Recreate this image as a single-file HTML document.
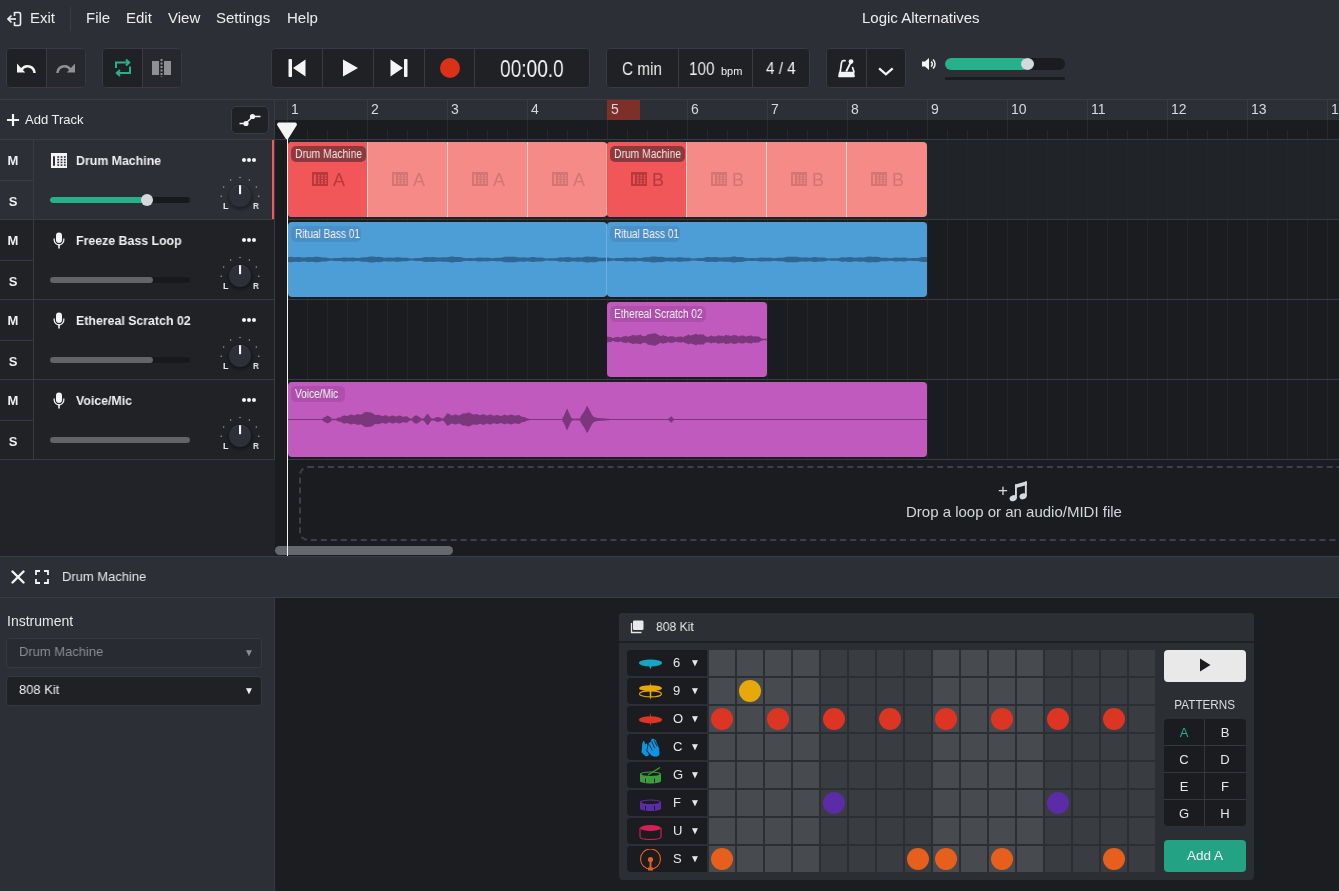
<!DOCTYPE html><html><head><meta charset="utf-8"><style>
*{box-sizing:border-box;margin:0;padding:0}
html,body{width:1339px;height:891px;overflow:hidden;background:#2c2f36;font-family:"Liberation Sans",sans-serif;color:#f2f2f2}
.abs{position:absolute}
.t{position:absolute;white-space:nowrap;line-height:1;will-change:transform}
.grp{position:absolute;background:#26282d;border:1px solid #383b42;border-radius:5px;overflow:hidden}
.sep{position:absolute;top:0;bottom:0;width:1px;background:#383b42}
</style></head><body>
<svg class="abs" style="left:7px;top:11px" width="15" height="16" viewBox="0 0 15 16"><path d="M7.5 1.5h4.5a1.5 1.5 0 0 1 1.5 1.5v10a1.5 1.5 0 0 1-1.5 1.5h-4.5" fill="none" stroke="#eee" stroke-width="1.6"/><path d="M7.5 1v4M7.5 11v4" stroke="#eee" stroke-width="1.6"/><path d="M1 8h8" stroke="#eee" stroke-width="1.7"/><path d="M4.5 4.5L1 8l3.5 3.5" fill="none" stroke="#eee" stroke-width="1.7"/></svg><div class="t" style="left:30px;top:10px;font-size:15px;color:#eee">Exit</div><div class="abs" style="left:70px;top:7px;width:1px;height:24px;background:#3a3d44"></div><div class="t" style="left:86px;top:10px;font-size:15px;color:#eee">File</div><div class="t" style="left:126px;top:10px;font-size:15px;color:#eee">Edit</div><div class="t" style="left:168px;top:10px;font-size:15px;color:#eee">View</div><div class="t" style="left:216px;top:10px;font-size:15px;color:#eee">Settings</div><div class="t" style="left:287px;top:10px;font-size:15px;color:#eee">Help</div><div class="t" style="left:862px;top:10px;font-size:15px;color:#eee">Logic Alternatives</div><div class="grp" style="left:6px;top:48px;width:80px;height:40px"><div class="abs" style="left:0px;top:0;width:40px;height:100%;background:#1f2125"></div><div class="abs" style="left:40px;top:0;width:38px;height:100%;background:#26282d"></div><div class="sep" style="left:39px"></div></div><div class="grp" style="left:102px;top:48px;width:80px;height:40px"><div class="abs" style="left:0px;top:0;width:40px;height:100%;background:#1f2125"></div><div class="abs" style="left:40px;top:0;width:38px;height:100%;background:#26282d"></div><div class="sep" style="left:39px"></div></div><div class="grp" style="left:271px;top:48px;width:319px;height:40px"><div class="abs" style="left:0px;top:0;width:51px;height:100%;background:#1f2125"></div><div class="abs" style="left:51px;top:0;width:51px;height:100%;background:#1f2125"></div><div class="sep" style="left:50px"></div><div class="abs" style="left:102px;top:0;width:51px;height:100%;background:#1f2125"></div><div class="sep" style="left:101px"></div><div class="abs" style="left:153px;top:0;width:50px;height:100%;background:#1f2125"></div><div class="sep" style="left:152px"></div><div class="abs" style="left:203px;top:0;width:116px;height:100%;background:#1f2125"></div><div class="sep" style="left:202px"></div></div><div class="grp" style="left:606px;top:48px;width:204px;height:40px"><div class="abs" style="left:0px;top:0;width:72px;height:100%;background:#1f2125"></div><div class="abs" style="left:72px;top:0;width:74px;height:100%;background:#1f2125"></div><div class="sep" style="left:71px"></div><div class="abs" style="left:146px;top:0;width:58px;height:100%;background:#1f2125"></div><div class="sep" style="left:145px"></div></div><div class="grp" style="left:826px;top:48px;width:80px;height:40px"><div class="abs" style="left:0px;top:0;width:40px;height:100%;background:#1f2125"></div><div class="abs" style="left:40px;top:0;width:40px;height:100%;background:#1f2125"></div><div class="sep" style="left:39px"></div></div><svg class="abs" style="left:16px;top:59px" width="20" height="16" viewBox="0 0 20 16"><path d="M5.6 10.5A7 7 0 0 1 18.5 14" fill="none" stroke="#f4f4f4" stroke-width="2.5"/><path d="M1 4.6V13.4H9.2z" fill="#f4f4f4"/></svg><svg class="abs" style="left:56px;top:59px" width="20" height="16" viewBox="0 0 20 16"><path d="M14.4 10.5A7 7 0 0 0 1.5 14" fill="none" stroke="#8f9094" stroke-width="2.5"/><path d="M19 4.6V13.4H10.8z" fill="#8f9094"/></svg><svg class="abs" style="left:113px;top:58px" width="20" height="20" viewBox="0 0 20 20"><path d="M3 10V4.5h12" fill="none" stroke="#26b28c" stroke-width="2"/><path d="M13 1.5l3.2 3-3.2 3" fill="none" stroke="#26b28c" stroke-width="2"/><path d="M17 8.5V15H5" fill="none" stroke="#26b28c" stroke-width="2"/><path d="M7 12l-3.2 3L7 18" fill="none" stroke="#26b28c" stroke-width="2"/></svg><svg class="abs" style="left:151px;top:58px" width="22" height="20" viewBox="0 0 22 20"><rect x="1" y="3" width="7" height="14" fill="#8f9094"/><rect x="13" y="3" width="7" height="14" fill="#8f9094"/><path d="M10.5 1v18" stroke="#8f9094" stroke-width="2" stroke-dasharray="2 1.5"/></svg><svg class="abs" style="left:287px;top:58px" width="20" height="20" viewBox="0 0 20 20"><rect x="1.5" y="1" width="3.5" height="18" rx="0.8" fill="#f4f4f4"/><path d="M18.5 1.5V18.5L6 10z" fill="#f4f4f4"/></svg><svg class="abs" style="left:341px;top:58px" width="20" height="20" viewBox="0 0 20 20"><path d="M2 1.5V18.5L17 10z" fill="#f4f4f4"/></svg><svg class="abs" style="left:389px;top:58px" width="20" height="20" viewBox="0 0 20 20"><path d="M1.5 1.5V18.5L14 10z" fill="#f4f4f4"/><rect x="15" y="1" width="3.5" height="18" rx="0.8" fill="#f4f4f4"/></svg><div class="abs" style="left:440px;top:58px;width:20px;height:20px;border-radius:50%;background:#d93218"></div><div class="t" style="left:500px;top:57px;font-size:24.5px;color:#f4f4f4;transform:scaleX(0.78);transform-origin:0 0">00:00.0</div><div class="t" style="left:622px;top:60px;font-size:18px;color:#f0f0f0;transform:scaleX(0.85);transform-origin:0 0">C min</div><div class="t" style="left:689px;top:60px;font-size:18px;color:#f0f0f0;transform:scaleX(0.85);transform-origin:0 0">100</div><div class="t" style="left:721px;top:66px;font-size:11px;color:#f0f0f0">bpm</div><div class="t" style="left:766px;top:60px;font-size:17px;color:#f0f0f0;transform:scaleX(0.9);transform-origin:0 0">4 / 4</div><svg class="abs" style="left:836px;top:58px" width="20" height="20" viewBox="0 0 20 20"><path d="M3 13.7H18L18.8 18Q19 19.2 17.8 19.2H3.2Q2 19.2 2.2 18Z" fill="#f4f4f4"/><path d="M4.2 14L5.5 4.8Q5.8 2.8 7.6 2.7H9" fill="none" stroke="#f4f4f4" stroke-width="1.7" stroke-linecap="round"/><path d="M16.6 9.6L18 14" stroke="#f4f4f4" stroke-width="1.7" stroke-linecap="round"/><path d="M10.2 13.5L15 3.8" stroke="#f4f4f4" stroke-width="1.9"/><circle cx="15" cy="3.6" r="2.4" fill="#f4f4f4"/></svg><svg class="abs" style="left:877px;top:60px" width="18" height="18" viewBox="0 0 18 18"><path d="M2.1 8.3L8.9 14.3L15.7 8.3" fill="none" stroke="#f4f4f4" stroke-width="2.3"/></svg><svg class="abs" style="left:921px;top:57px" width="16" height="14" viewBox="0 0 16 14"><path d="M1 4.5h3l4-3.5v12l-4-3.5H1z" fill="#f4f4f4"/><path d="M10 4.5a3 3 0 0 1 0 5M12 2.5a6 6 0 0 1 0 9" fill="none" stroke="#f4f4f4" stroke-width="1.5"/></svg><div class="abs" style="left:945px;top:58px;width:120px;height:12px;border-radius:6px;background:#1b1c1f"></div><div class="abs" style="left:945px;top:58px;width:84px;height:12px;border-radius:6px;background:#26b08b"></div><div class="abs" style="left:1021px;top:58px;width:13px;height:12px;border-radius:50%;background:#d5d9dc"></div><div class="abs" style="left:945px;top:77px;width:120px;height:3px;border-radius:1px;background:#1b1c1f"></div><div class="abs" style="left:0;top:99px;width:1339px;height:1px;background:#383b42"></div><div class="abs" style="left:0;top:100px;width:275px;height:456px;background:#212328"></div><div class="abs" style="left:0;top:100px;width:275px;height:39px;background:#2c2f36"></div><svg class="abs" style="left:7px;top:114px" width="12" height="12" viewBox="0 0 12 12"><path d="M6 0v12M0 6h12" stroke="#f4f4f4" stroke-width="2.2"/></svg><div class="t" style="left:25px;top:113px;font-size:13px;color:#f0f0f0">Add Track</div><div class="abs" style="left:231px;top:106px;width:38px;height:28px;border-radius:5px;background:#1f2125;border:1px solid #3a3d44"></div><svg class="abs" style="left:239px;top:112px" width="22" height="16" viewBox="0 0 22 16"><path d="M0.5 11.5h6M16 4.5h5.5M6.5 11.5L14 4.5" stroke="#f4f4f4" stroke-width="1.4"/><circle cx="7" cy="11.5" r="2.6" fill="#f4f4f4"/><circle cx="13.5" cy="4.5" r="2.6" fill="#f4f4f4"/></svg><div class="abs" style="left:0;top:139px;width:1339px;height:1px;background:#383b42"></div><div class="abs" style="left:0;top:140px;width:275px;height:79px;background:#2c2f36"></div><div class="abs" style="left:0;top:219px;width:275px;height:1px;background:#383b42"></div><div class="abs" style="left:33px;top:140px;width:1px;height:79px;background:#383b42"></div><div class="abs" style="left:0;top:180px;width:33px;height:1px;background:#383b42"></div><div class="t" style="left:3px;top:154px;width:20px;text-align:center;font-size:13px;font-weight:bold;color:#f0f0f0">M</div><div class="t" style="left:3px;top:195px;width:20px;text-align:center;font-size:13px;font-weight:bold;color:#f0f0f0">S</div><svg class="abs" style="left:51px;top:153px" width="16" height="15" viewBox="0 0 16 15"><rect x="0" y="0" width="16" height="15" fill="#f4f4f4"/><rect x="2" y="3" width="2" height="10" rx="1" fill="#2c2f36"/><rect x="6.3" y="3.2" width="1.8" height="1.6" fill="#2c2f36"/><rect x="6.3" y="5.9" width="1.8" height="1.6" fill="#2c2f36"/><rect x="6.3" y="8.6" width="1.8" height="1.6" fill="#2c2f36"/><rect x="6.3" y="11.3" width="1.8" height="1.6" fill="#2c2f36"/><rect x="9.6" y="3.2" width="1.8" height="1.6" fill="#2c2f36"/><rect x="9.6" y="5.9" width="1.8" height="1.6" fill="#2c2f36"/><rect x="9.6" y="8.6" width="1.8" height="1.6" fill="#2c2f36"/><rect x="9.6" y="11.3" width="1.8" height="1.6" fill="#2c2f36"/><rect x="12.9" y="3.2" width="1.8" height="1.6" fill="#2c2f36"/><rect x="12.9" y="5.9" width="1.8" height="1.6" fill="#2c2f36"/><rect x="12.9" y="8.6" width="1.8" height="1.6" fill="#2c2f36"/><rect x="12.9" y="11.3" width="1.8" height="1.6" fill="#2c2f36"/></svg><div class="t" style="left:76px;top:154px;font-size:13px;font-weight:bold;color:#f0f0f0;transform:scaleX(0.95);transform-origin:0 0">Drum Machine</div><div class="abs" style="left:242px;top:158px;width:4px;height:4px;border-radius:50%;background:#f4f4f4"></div><div class="abs" style="left:247px;top:158px;width:4px;height:4px;border-radius:50%;background:#f4f4f4"></div><div class="abs" style="left:252px;top:158px;width:4px;height:4px;border-radius:50%;background:#f4f4f4"></div><div class="abs" style="left:50px;top:197px;width:140px;height:6px;border-radius:3px;background:#18191c"></div><div class="abs" style="left:50px;top:197px;width:98px;height:6px;border-radius:3px;background:#26b08b"></div><div class="abs" style="left:141px;top:194px;width:12px;height:12px;border-radius:50%;background:#d5d9dc"></div><svg class="abs" style="left:220px;top:176px" width="40" height="40" viewBox="0 0 40 40"><defs><radialGradient id="ks0"><stop offset="0.6" stop-color="#000" stop-opacity="0.4"/><stop offset="1" stop-color="#000" stop-opacity="0"/></radialGradient><linearGradient id="kr0" x1="0" y1="0" x2="0" y2="1"><stop offset="0" stop-color="#454850"/><stop offset="0.5" stop-color="#2d3038"/></linearGradient></defs><circle cx="20.0" cy="1.5" r="0.75" fill="#a0a2a6"/><circle cx="29.4" cy="4.0" r="0.75" fill="#a0a2a6"/><circle cx="10.6" cy="4.0" r="0.75" fill="#a0a2a6"/><circle cx="36.3" cy="10.9" r="0.75" fill="#a0a2a6"/><circle cx="3.7" cy="10.9" r="0.75" fill="#a0a2a6"/><circle cx="38.8" cy="20.3" r="0.75" fill="#a0a2a6"/><circle cx="1.2" cy="20.3" r="0.75" fill="#a0a2a6"/><circle cx="20.5" cy="21.5" r="14.5" fill="url(#ks0)"/><circle cx="20" cy="20" r="11" fill="url(#kr0)"/><circle cx="20" cy="20" r="10.5" fill="#2d3038"/><rect x="19" y="9.2" width="2.1" height="9" fill="#f4f4f4"/></svg><div class="t" style="left:222.5px;top:202px;font-size:9px;font-weight:bold;color:#e8e8e8">L</div><div class="t" style="left:253px;top:202px;font-size:9px;font-weight:bold;color:#e8e8e8;transform:scaleX(0.9);transform-origin:0 0">R</div><div class="abs" style="left:272px;top:140px;width:3px;height:79px;background:#f05a57"></div><div class="abs" style="left:0;top:220px;width:275px;height:79px;background:#202226"></div><div class="abs" style="left:0;top:299px;width:275px;height:1px;background:#383b42"></div><div class="abs" style="left:33px;top:220px;width:1px;height:79px;background:#383b42"></div><div class="abs" style="left:0;top:260px;width:33px;height:1px;background:#383b42"></div><div class="t" style="left:3px;top:234px;width:20px;text-align:center;font-size:13px;font-weight:bold;color:#f0f0f0">M</div><div class="t" style="left:3px;top:275px;width:20px;text-align:center;font-size:13px;font-weight:bold;color:#f0f0f0">S</div><svg class="abs" style="left:53px;top:232px" width="12" height="17" viewBox="0 0 12 17"><rect x="3" y="0.5" width="6" height="10.5" rx="3" fill="#f4f4f4"/><path d="M1.2 6.5v1.5a4.8 4.8 0 0 0 9.6 0V6.5" fill="none" stroke="#f4f4f4" stroke-width="1.3"/><rect x="5.2" y="12" width="1.6" height="4.5" fill="#f4f4f4"/></svg><div class="t" style="left:76px;top:234px;font-size:13px;font-weight:bold;color:#f0f0f0;transform:scaleX(0.95);transform-origin:0 0">Freeze Bass Loop</div><div class="abs" style="left:242px;top:238px;width:4px;height:4px;border-radius:50%;background:#f4f4f4"></div><div class="abs" style="left:247px;top:238px;width:4px;height:4px;border-radius:50%;background:#f4f4f4"></div><div class="abs" style="left:252px;top:238px;width:4px;height:4px;border-radius:50%;background:#f4f4f4"></div><div class="abs" style="left:50px;top:277px;width:140px;height:6px;border-radius:3px;background:#18191c"></div><div class="abs" style="left:50px;top:277px;width:103px;height:6px;border-radius:3px;background:#636468"></div><svg class="abs" style="left:220px;top:256px" width="40" height="40" viewBox="0 0 40 40"><defs><radialGradient id="ks1"><stop offset="0.6" stop-color="#000" stop-opacity="0.4"/><stop offset="1" stop-color="#000" stop-opacity="0"/></radialGradient><linearGradient id="kr1" x1="0" y1="0" x2="0" y2="1"><stop offset="0" stop-color="#454850"/><stop offset="0.5" stop-color="#2d3038"/></linearGradient></defs><circle cx="20.0" cy="1.5" r="0.75" fill="#a0a2a6"/><circle cx="29.4" cy="4.0" r="0.75" fill="#a0a2a6"/><circle cx="10.6" cy="4.0" r="0.75" fill="#a0a2a6"/><circle cx="36.3" cy="10.9" r="0.75" fill="#a0a2a6"/><circle cx="3.7" cy="10.9" r="0.75" fill="#a0a2a6"/><circle cx="38.8" cy="20.3" r="0.75" fill="#a0a2a6"/><circle cx="1.2" cy="20.3" r="0.75" fill="#a0a2a6"/><circle cx="20.5" cy="21.5" r="14.5" fill="url(#ks1)"/><circle cx="20" cy="20" r="11" fill="url(#kr1)"/><circle cx="20" cy="20" r="10.5" fill="#2d3038"/><rect x="19" y="9.2" width="2.1" height="9" fill="#f4f4f4"/></svg><div class="t" style="left:222.5px;top:282px;font-size:9px;font-weight:bold;color:#e8e8e8">L</div><div class="t" style="left:253px;top:282px;font-size:9px;font-weight:bold;color:#e8e8e8;transform:scaleX(0.9);transform-origin:0 0">R</div><div class="abs" style="left:0;top:300px;width:275px;height:79px;background:#202226"></div><div class="abs" style="left:0;top:379px;width:275px;height:1px;background:#383b42"></div><div class="abs" style="left:33px;top:300px;width:1px;height:79px;background:#383b42"></div><div class="abs" style="left:0;top:340px;width:33px;height:1px;background:#383b42"></div><div class="t" style="left:3px;top:314px;width:20px;text-align:center;font-size:13px;font-weight:bold;color:#f0f0f0">M</div><div class="t" style="left:3px;top:355px;width:20px;text-align:center;font-size:13px;font-weight:bold;color:#f0f0f0">S</div><svg class="abs" style="left:53px;top:312px" width="12" height="17" viewBox="0 0 12 17"><rect x="3" y="0.5" width="6" height="10.5" rx="3" fill="#f4f4f4"/><path d="M1.2 6.5v1.5a4.8 4.8 0 0 0 9.6 0V6.5" fill="none" stroke="#f4f4f4" stroke-width="1.3"/><rect x="5.2" y="12" width="1.6" height="4.5" fill="#f4f4f4"/></svg><div class="t" style="left:76px;top:314px;font-size:13px;font-weight:bold;color:#f0f0f0;transform:scaleX(0.95);transform-origin:0 0">Ethereal Scratch 02</div><div class="abs" style="left:242px;top:318px;width:4px;height:4px;border-radius:50%;background:#f4f4f4"></div><div class="abs" style="left:247px;top:318px;width:4px;height:4px;border-radius:50%;background:#f4f4f4"></div><div class="abs" style="left:252px;top:318px;width:4px;height:4px;border-radius:50%;background:#f4f4f4"></div><div class="abs" style="left:50px;top:357px;width:140px;height:6px;border-radius:3px;background:#18191c"></div><div class="abs" style="left:50px;top:357px;width:103px;height:6px;border-radius:3px;background:#636468"></div><svg class="abs" style="left:220px;top:336px" width="40" height="40" viewBox="0 0 40 40"><defs><radialGradient id="ks2"><stop offset="0.6" stop-color="#000" stop-opacity="0.4"/><stop offset="1" stop-color="#000" stop-opacity="0"/></radialGradient><linearGradient id="kr2" x1="0" y1="0" x2="0" y2="1"><stop offset="0" stop-color="#454850"/><stop offset="0.5" stop-color="#2d3038"/></linearGradient></defs><circle cx="20.0" cy="1.5" r="0.75" fill="#a0a2a6"/><circle cx="29.4" cy="4.0" r="0.75" fill="#a0a2a6"/><circle cx="10.6" cy="4.0" r="0.75" fill="#a0a2a6"/><circle cx="36.3" cy="10.9" r="0.75" fill="#a0a2a6"/><circle cx="3.7" cy="10.9" r="0.75" fill="#a0a2a6"/><circle cx="38.8" cy="20.3" r="0.75" fill="#a0a2a6"/><circle cx="1.2" cy="20.3" r="0.75" fill="#a0a2a6"/><circle cx="20.5" cy="21.5" r="14.5" fill="url(#ks2)"/><circle cx="20" cy="20" r="11" fill="url(#kr2)"/><circle cx="20" cy="20" r="10.5" fill="#2d3038"/><rect x="19" y="9.2" width="2.1" height="9" fill="#f4f4f4"/></svg><div class="t" style="left:222.5px;top:362px;font-size:9px;font-weight:bold;color:#e8e8e8">L</div><div class="t" style="left:253px;top:362px;font-size:9px;font-weight:bold;color:#e8e8e8;transform:scaleX(0.9);transform-origin:0 0">R</div><div class="abs" style="left:0;top:380px;width:275px;height:79px;background:#202226"></div><div class="abs" style="left:0;top:459px;width:275px;height:1px;background:#383b42"></div><div class="abs" style="left:33px;top:380px;width:1px;height:79px;background:#383b42"></div><div class="abs" style="left:0;top:420px;width:33px;height:1px;background:#383b42"></div><div class="t" style="left:3px;top:394px;width:20px;text-align:center;font-size:13px;font-weight:bold;color:#f0f0f0">M</div><div class="t" style="left:3px;top:435px;width:20px;text-align:center;font-size:13px;font-weight:bold;color:#f0f0f0">S</div><svg class="abs" style="left:53px;top:392px" width="12" height="17" viewBox="0 0 12 17"><rect x="3" y="0.5" width="6" height="10.5" rx="3" fill="#f4f4f4"/><path d="M1.2 6.5v1.5a4.8 4.8 0 0 0 9.6 0V6.5" fill="none" stroke="#f4f4f4" stroke-width="1.3"/><rect x="5.2" y="12" width="1.6" height="4.5" fill="#f4f4f4"/></svg><div class="t" style="left:76px;top:394px;font-size:13px;font-weight:bold;color:#f0f0f0;transform:scaleX(0.95);transform-origin:0 0">Voice/Mic</div><div class="abs" style="left:242px;top:398px;width:4px;height:4px;border-radius:50%;background:#f4f4f4"></div><div class="abs" style="left:247px;top:398px;width:4px;height:4px;border-radius:50%;background:#f4f4f4"></div><div class="abs" style="left:252px;top:398px;width:4px;height:4px;border-radius:50%;background:#f4f4f4"></div><div class="abs" style="left:50px;top:437px;width:140px;height:6px;border-radius:3px;background:#18191c"></div><div class="abs" style="left:50px;top:437px;width:140px;height:6px;border-radius:3px;background:#636468"></div><svg class="abs" style="left:220px;top:416px" width="40" height="40" viewBox="0 0 40 40"><defs><radialGradient id="ks3"><stop offset="0.6" stop-color="#000" stop-opacity="0.4"/><stop offset="1" stop-color="#000" stop-opacity="0"/></radialGradient><linearGradient id="kr3" x1="0" y1="0" x2="0" y2="1"><stop offset="0" stop-color="#454850"/><stop offset="0.5" stop-color="#2d3038"/></linearGradient></defs><circle cx="20.0" cy="1.5" r="0.75" fill="#a0a2a6"/><circle cx="29.4" cy="4.0" r="0.75" fill="#a0a2a6"/><circle cx="10.6" cy="4.0" r="0.75" fill="#a0a2a6"/><circle cx="36.3" cy="10.9" r="0.75" fill="#a0a2a6"/><circle cx="3.7" cy="10.9" r="0.75" fill="#a0a2a6"/><circle cx="38.8" cy="20.3" r="0.75" fill="#a0a2a6"/><circle cx="1.2" cy="20.3" r="0.75" fill="#a0a2a6"/><circle cx="20.5" cy="21.5" r="14.5" fill="url(#ks3)"/><circle cx="20" cy="20" r="11" fill="url(#kr3)"/><circle cx="20" cy="20" r="10.5" fill="#2d3038"/><rect x="19" y="9.2" width="2.1" height="9" fill="#f4f4f4"/></svg><div class="t" style="left:222.5px;top:442px;font-size:9px;font-weight:bold;color:#e8e8e8">L</div><div class="t" style="left:253px;top:442px;font-size:9px;font-weight:bold;color:#e8e8e8;transform:scaleX(0.9);transform-origin:0 0">R</div><div class="abs" style="left:274px;top:100px;width:1px;height:360px;background:#383b42"></div><div class="abs" style="left:275px;top:100px;width:1064px;height:20px;background:#2c2f36"></div><div class="abs" style="left:275px;top:120px;width:1064px;height:19px;background:#1b1c1f"></div><div class="abs" style="left:275px;top:140px;width:1064px;height:416px;background:#1b1c1f"></div><div class="abs" style="left:287px;top:140px;width:1052px;height:79px;background:#202327"></div><div class="abs" style="left:287px;top:100px;width:1px;height:20px;background:#383b42"></div><div class="abs" style="left:287px;top:120px;width:1px;height:19px;background:#26292d"></div><div class="abs" style="left:287px;top:140px;width:1px;height:320px;background:#222627"></div><div class="abs" style="left:307px;top:130px;width:1px;height:9px;background:#25292b"></div><div class="abs" style="left:307px;top:140px;width:1px;height:320px;background:#222627"></div><div class="abs" style="left:327px;top:130px;width:1px;height:9px;background:#25292b"></div><div class="abs" style="left:327px;top:140px;width:1px;height:320px;background:#222627"></div><div class="abs" style="left:347px;top:130px;width:1px;height:9px;background:#25292b"></div><div class="abs" style="left:347px;top:140px;width:1px;height:320px;background:#222627"></div><div class="abs" style="left:367px;top:100px;width:1px;height:20px;background:#383b42"></div><div class="abs" style="left:367px;top:120px;width:1px;height:19px;background:#26292d"></div><div class="abs" style="left:367px;top:140px;width:1px;height:320px;background:#222627"></div><div class="abs" style="left:387px;top:130px;width:1px;height:9px;background:#25292b"></div><div class="abs" style="left:387px;top:140px;width:1px;height:320px;background:#222627"></div><div class="abs" style="left:407px;top:130px;width:1px;height:9px;background:#25292b"></div><div class="abs" style="left:407px;top:140px;width:1px;height:320px;background:#222627"></div><div class="abs" style="left:427px;top:130px;width:1px;height:9px;background:#25292b"></div><div class="abs" style="left:427px;top:140px;width:1px;height:320px;background:#222627"></div><div class="abs" style="left:447px;top:100px;width:1px;height:20px;background:#383b42"></div><div class="abs" style="left:447px;top:120px;width:1px;height:19px;background:#26292d"></div><div class="abs" style="left:447px;top:140px;width:1px;height:320px;background:#222627"></div><div class="abs" style="left:467px;top:130px;width:1px;height:9px;background:#25292b"></div><div class="abs" style="left:467px;top:140px;width:1px;height:320px;background:#222627"></div><div class="abs" style="left:487px;top:130px;width:1px;height:9px;background:#25292b"></div><div class="abs" style="left:487px;top:140px;width:1px;height:320px;background:#222627"></div><div class="abs" style="left:507px;top:130px;width:1px;height:9px;background:#25292b"></div><div class="abs" style="left:507px;top:140px;width:1px;height:320px;background:#222627"></div><div class="abs" style="left:527px;top:100px;width:1px;height:20px;background:#383b42"></div><div class="abs" style="left:527px;top:120px;width:1px;height:19px;background:#26292d"></div><div class="abs" style="left:527px;top:140px;width:1px;height:320px;background:#222627"></div><div class="abs" style="left:547px;top:130px;width:1px;height:9px;background:#25292b"></div><div class="abs" style="left:547px;top:140px;width:1px;height:320px;background:#222627"></div><div class="abs" style="left:567px;top:130px;width:1px;height:9px;background:#25292b"></div><div class="abs" style="left:567px;top:140px;width:1px;height:320px;background:#222627"></div><div class="abs" style="left:587px;top:130px;width:1px;height:9px;background:#25292b"></div><div class="abs" style="left:587px;top:140px;width:1px;height:320px;background:#222627"></div><div class="abs" style="left:607px;top:100px;width:1px;height:20px;background:#383b42"></div><div class="abs" style="left:607px;top:120px;width:1px;height:19px;background:#26292d"></div><div class="abs" style="left:607px;top:140px;width:1px;height:320px;background:#222627"></div><div class="abs" style="left:627px;top:130px;width:1px;height:9px;background:#25292b"></div><div class="abs" style="left:627px;top:140px;width:1px;height:320px;background:#222627"></div><div class="abs" style="left:647px;top:130px;width:1px;height:9px;background:#25292b"></div><div class="abs" style="left:647px;top:140px;width:1px;height:320px;background:#222627"></div><div class="abs" style="left:667px;top:130px;width:1px;height:9px;background:#25292b"></div><div class="abs" style="left:667px;top:140px;width:1px;height:320px;background:#222627"></div><div class="abs" style="left:687px;top:100px;width:1px;height:20px;background:#383b42"></div><div class="abs" style="left:687px;top:120px;width:1px;height:19px;background:#26292d"></div><div class="abs" style="left:687px;top:140px;width:1px;height:320px;background:#222627"></div><div class="abs" style="left:707px;top:130px;width:1px;height:9px;background:#25292b"></div><div class="abs" style="left:707px;top:140px;width:1px;height:320px;background:#222627"></div><div class="abs" style="left:727px;top:130px;width:1px;height:9px;background:#25292b"></div><div class="abs" style="left:727px;top:140px;width:1px;height:320px;background:#222627"></div><div class="abs" style="left:747px;top:130px;width:1px;height:9px;background:#25292b"></div><div class="abs" style="left:747px;top:140px;width:1px;height:320px;background:#222627"></div><div class="abs" style="left:767px;top:100px;width:1px;height:20px;background:#383b42"></div><div class="abs" style="left:767px;top:120px;width:1px;height:19px;background:#26292d"></div><div class="abs" style="left:767px;top:140px;width:1px;height:320px;background:#222627"></div><div class="abs" style="left:787px;top:130px;width:1px;height:9px;background:#25292b"></div><div class="abs" style="left:787px;top:140px;width:1px;height:320px;background:#222627"></div><div class="abs" style="left:807px;top:130px;width:1px;height:9px;background:#25292b"></div><div class="abs" style="left:807px;top:140px;width:1px;height:320px;background:#222627"></div><div class="abs" style="left:827px;top:130px;width:1px;height:9px;background:#25292b"></div><div class="abs" style="left:827px;top:140px;width:1px;height:320px;background:#222627"></div><div class="abs" style="left:847px;top:100px;width:1px;height:20px;background:#383b42"></div><div class="abs" style="left:847px;top:120px;width:1px;height:19px;background:#26292d"></div><div class="abs" style="left:847px;top:140px;width:1px;height:320px;background:#222627"></div><div class="abs" style="left:867px;top:130px;width:1px;height:9px;background:#25292b"></div><div class="abs" style="left:867px;top:140px;width:1px;height:320px;background:#222627"></div><div class="abs" style="left:887px;top:130px;width:1px;height:9px;background:#25292b"></div><div class="abs" style="left:887px;top:140px;width:1px;height:320px;background:#222627"></div><div class="abs" style="left:907px;top:130px;width:1px;height:9px;background:#25292b"></div><div class="abs" style="left:907px;top:140px;width:1px;height:320px;background:#222627"></div><div class="abs" style="left:927px;top:100px;width:1px;height:20px;background:#383b42"></div><div class="abs" style="left:927px;top:120px;width:1px;height:19px;background:#26292d"></div><div class="abs" style="left:927px;top:140px;width:1px;height:320px;background:#222627"></div><div class="abs" style="left:947px;top:130px;width:1px;height:9px;background:#25292b"></div><div class="abs" style="left:947px;top:140px;width:1px;height:320px;background:#222627"></div><div class="abs" style="left:967px;top:130px;width:1px;height:9px;background:#25292b"></div><div class="abs" style="left:967px;top:140px;width:1px;height:320px;background:#222627"></div><div class="abs" style="left:987px;top:130px;width:1px;height:9px;background:#25292b"></div><div class="abs" style="left:987px;top:140px;width:1px;height:320px;background:#222627"></div><div class="abs" style="left:1007px;top:100px;width:1px;height:20px;background:#383b42"></div><div class="abs" style="left:1007px;top:120px;width:1px;height:19px;background:#26292d"></div><div class="abs" style="left:1007px;top:140px;width:1px;height:320px;background:#222627"></div><div class="abs" style="left:1027px;top:130px;width:1px;height:9px;background:#25292b"></div><div class="abs" style="left:1027px;top:140px;width:1px;height:320px;background:#222627"></div><div class="abs" style="left:1047px;top:130px;width:1px;height:9px;background:#25292b"></div><div class="abs" style="left:1047px;top:140px;width:1px;height:320px;background:#222627"></div><div class="abs" style="left:1067px;top:130px;width:1px;height:9px;background:#25292b"></div><div class="abs" style="left:1067px;top:140px;width:1px;height:320px;background:#222627"></div><div class="abs" style="left:1087px;top:100px;width:1px;height:20px;background:#383b42"></div><div class="abs" style="left:1087px;top:120px;width:1px;height:19px;background:#26292d"></div><div class="abs" style="left:1087px;top:140px;width:1px;height:320px;background:#222627"></div><div class="abs" style="left:1107px;top:130px;width:1px;height:9px;background:#25292b"></div><div class="abs" style="left:1107px;top:140px;width:1px;height:320px;background:#222627"></div><div class="abs" style="left:1127px;top:130px;width:1px;height:9px;background:#25292b"></div><div class="abs" style="left:1127px;top:140px;width:1px;height:320px;background:#222627"></div><div class="abs" style="left:1147px;top:130px;width:1px;height:9px;background:#25292b"></div><div class="abs" style="left:1147px;top:140px;width:1px;height:320px;background:#222627"></div><div class="abs" style="left:1167px;top:100px;width:1px;height:20px;background:#383b42"></div><div class="abs" style="left:1167px;top:120px;width:1px;height:19px;background:#26292d"></div><div class="abs" style="left:1167px;top:140px;width:1px;height:320px;background:#222627"></div><div class="abs" style="left:1187px;top:130px;width:1px;height:9px;background:#25292b"></div><div class="abs" style="left:1187px;top:140px;width:1px;height:320px;background:#222627"></div><div class="abs" style="left:1207px;top:130px;width:1px;height:9px;background:#25292b"></div><div class="abs" style="left:1207px;top:140px;width:1px;height:320px;background:#222627"></div><div class="abs" style="left:1227px;top:130px;width:1px;height:9px;background:#25292b"></div><div class="abs" style="left:1227px;top:140px;width:1px;height:320px;background:#222627"></div><div class="abs" style="left:1247px;top:100px;width:1px;height:20px;background:#383b42"></div><div class="abs" style="left:1247px;top:120px;width:1px;height:19px;background:#26292d"></div><div class="abs" style="left:1247px;top:140px;width:1px;height:320px;background:#222627"></div><div class="abs" style="left:1267px;top:130px;width:1px;height:9px;background:#25292b"></div><div class="abs" style="left:1267px;top:140px;width:1px;height:320px;background:#222627"></div><div class="abs" style="left:1287px;top:130px;width:1px;height:9px;background:#25292b"></div><div class="abs" style="left:1287px;top:140px;width:1px;height:320px;background:#222627"></div><div class="abs" style="left:1307px;top:130px;width:1px;height:9px;background:#25292b"></div><div class="abs" style="left:1307px;top:140px;width:1px;height:320px;background:#222627"></div><div class="abs" style="left:1327px;top:100px;width:1px;height:20px;background:#383b42"></div><div class="abs" style="left:1327px;top:120px;width:1px;height:19px;background:#26292d"></div><div class="abs" style="left:1327px;top:140px;width:1px;height:320px;background:#222627"></div><div class="t" style="left:291px;top:102px;font-size:14px;color:#d8d9db">1</div><div class="t" style="left:371px;top:102px;font-size:14px;color:#d8d9db">2</div><div class="t" style="left:451px;top:102px;font-size:14px;color:#d8d9db">3</div><div class="t" style="left:531px;top:102px;font-size:14px;color:#d8d9db">4</div><div class="abs" style="left:607px;top:100px;width:33px;height:20px;background:#7e3028"></div><div class="t" style="left:611px;top:102px;font-size:14px;color:#d8d9db">5</div><div class="t" style="left:691px;top:102px;font-size:14px;color:#d8d9db">6</div><div class="t" style="left:771px;top:102px;font-size:14px;color:#d8d9db">7</div><div class="t" style="left:851px;top:102px;font-size:14px;color:#d8d9db">8</div><div class="t" style="left:931px;top:102px;font-size:14px;color:#d8d9db">9</div><div class="t" style="left:1011px;top:102px;font-size:14px;color:#d8d9db">10</div><div class="t" style="left:1091px;top:102px;font-size:14px;color:#d8d9db">11</div><div class="t" style="left:1171px;top:102px;font-size:14px;color:#d8d9db">12</div><div class="t" style="left:1251px;top:102px;font-size:14px;color:#d8d9db">13</div><div class="t" style="left:1331px;top:102px;font-size:14px;color:#d8d9db">14</div><div class="abs" style="left:287px;top:219px;width:1052px;height:1px;background:#393b44"></div><div class="abs" style="left:287px;top:299px;width:1052px;height:1px;background:#393b44"></div><div class="abs" style="left:287px;top:379px;width:1052px;height:1px;background:#393b44"></div><div class="abs" style="left:287px;top:459px;width:1052px;height:1px;background:#393b44"></div><div class="abs" style="left:288px;top:142px;width:319px;height:75px;border-radius:4px;overflow:hidden;background:#f58a87"><div class="abs" style="left:318px;top:0;width:1px;height:75px;background:#f7a9a6"></div><div class="abs" style="left:0;top:0;width:79px;height:75px;background:#f15758"></div><div class="abs" style="left:79px;top:0;width:1px;height:75px;background:#fbd3d1"></div><div class="abs" style="left:159px;top:0;width:1px;height:75px;background:#fbd3d1"></div><div class="abs" style="left:239px;top:0;width:1px;height:75px;background:#fbd3d1"></div><svg class="abs" style="left:24px;top:30px" width="16" height="14" viewBox="0 0 16 14"><rect width="16" height="14" fill="#b8393c"/><rect x="2" y="2.5" width="1.8" height="9.5" fill="#f15758"/><rect x="6.0" y="3.0" width="1.6" height="1.5" fill="#f15758"/><rect x="6.0" y="5.5" width="1.6" height="1.5" fill="#f15758"/><rect x="6.0" y="8.0" width="1.6" height="1.5" fill="#f15758"/><rect x="6.0" y="10.5" width="1.6" height="1.5" fill="#f15758"/><rect x="9.4" y="3.0" width="1.6" height="1.5" fill="#f15758"/><rect x="9.4" y="5.5" width="1.6" height="1.5" fill="#f15758"/><rect x="9.4" y="8.0" width="1.6" height="1.5" fill="#f15758"/><rect x="9.4" y="10.5" width="1.6" height="1.5" fill="#f15758"/><rect x="12.8" y="3.0" width="1.6" height="1.5" fill="#f15758"/><rect x="12.8" y="5.5" width="1.6" height="1.5" fill="#f15758"/><rect x="12.8" y="8.0" width="1.6" height="1.5" fill="#f15758"/><rect x="12.8" y="10.5" width="1.6" height="1.5" fill="#f15758"/></svg><div class="t" style="left:45px;top:29px;font-size:18px;color:#b8393c">A</div><svg class="abs" style="left:104px;top:30px" width="16" height="14" viewBox="0 0 16 14"><rect width="16" height="14" fill="#d27573"/><rect x="2" y="2.5" width="1.8" height="9.5" fill="#f58a87"/><rect x="6.0" y="3.0" width="1.6" height="1.5" fill="#f58a87"/><rect x="6.0" y="5.5" width="1.6" height="1.5" fill="#f58a87"/><rect x="6.0" y="8.0" width="1.6" height="1.5" fill="#f58a87"/><rect x="6.0" y="10.5" width="1.6" height="1.5" fill="#f58a87"/><rect x="9.4" y="3.0" width="1.6" height="1.5" fill="#f58a87"/><rect x="9.4" y="5.5" width="1.6" height="1.5" fill="#f58a87"/><rect x="9.4" y="8.0" width="1.6" height="1.5" fill="#f58a87"/><rect x="9.4" y="10.5" width="1.6" height="1.5" fill="#f58a87"/><rect x="12.8" y="3.0" width="1.6" height="1.5" fill="#f58a87"/><rect x="12.8" y="5.5" width="1.6" height="1.5" fill="#f58a87"/><rect x="12.8" y="8.0" width="1.6" height="1.5" fill="#f58a87"/><rect x="12.8" y="10.5" width="1.6" height="1.5" fill="#f58a87"/></svg><div class="t" style="left:125px;top:29px;font-size:18px;color:#d27573">A</div><svg class="abs" style="left:184px;top:30px" width="16" height="14" viewBox="0 0 16 14"><rect width="16" height="14" fill="#d27573"/><rect x="2" y="2.5" width="1.8" height="9.5" fill="#f58a87"/><rect x="6.0" y="3.0" width="1.6" height="1.5" fill="#f58a87"/><rect x="6.0" y="5.5" width="1.6" height="1.5" fill="#f58a87"/><rect x="6.0" y="8.0" width="1.6" height="1.5" fill="#f58a87"/><rect x="6.0" y="10.5" width="1.6" height="1.5" fill="#f58a87"/><rect x="9.4" y="3.0" width="1.6" height="1.5" fill="#f58a87"/><rect x="9.4" y="5.5" width="1.6" height="1.5" fill="#f58a87"/><rect x="9.4" y="8.0" width="1.6" height="1.5" fill="#f58a87"/><rect x="9.4" y="10.5" width="1.6" height="1.5" fill="#f58a87"/><rect x="12.8" y="3.0" width="1.6" height="1.5" fill="#f58a87"/><rect x="12.8" y="5.5" width="1.6" height="1.5" fill="#f58a87"/><rect x="12.8" y="8.0" width="1.6" height="1.5" fill="#f58a87"/><rect x="12.8" y="10.5" width="1.6" height="1.5" fill="#f58a87"/></svg><div class="t" style="left:205px;top:29px;font-size:18px;color:#d27573">A</div><svg class="abs" style="left:264px;top:30px" width="16" height="14" viewBox="0 0 16 14"><rect width="16" height="14" fill="#d27573"/><rect x="2" y="2.5" width="1.8" height="9.5" fill="#f58a87"/><rect x="6.0" y="3.0" width="1.6" height="1.5" fill="#f58a87"/><rect x="6.0" y="5.5" width="1.6" height="1.5" fill="#f58a87"/><rect x="6.0" y="8.0" width="1.6" height="1.5" fill="#f58a87"/><rect x="6.0" y="10.5" width="1.6" height="1.5" fill="#f58a87"/><rect x="9.4" y="3.0" width="1.6" height="1.5" fill="#f58a87"/><rect x="9.4" y="5.5" width="1.6" height="1.5" fill="#f58a87"/><rect x="9.4" y="8.0" width="1.6" height="1.5" fill="#f58a87"/><rect x="9.4" y="10.5" width="1.6" height="1.5" fill="#f58a87"/><rect x="12.8" y="3.0" width="1.6" height="1.5" fill="#f58a87"/><rect x="12.8" y="5.5" width="1.6" height="1.5" fill="#f58a87"/><rect x="12.8" y="8.0" width="1.6" height="1.5" fill="#f58a87"/><rect x="12.8" y="10.5" width="1.6" height="1.5" fill="#f58a87"/></svg><div class="t" style="left:285px;top:29px;font-size:18px;color:#d27573">A</div><div class="abs" style="left:3px;top:4px;width:75px;height:16px;border-radius:5px;background:#8d3a3e"></div><div class="t" style="left:7px;top:6px;font-size:12px;color:#f3e3e3;transform:scaleX(0.86);transform-origin:0 0">Drum Machine</div></div><div class="abs" style="left:607px;top:142px;width:320px;height:75px;border-radius:4px;overflow:hidden;background:#f58a87"><div class="abs" style="left:0;top:0;width:79px;height:75px;background:#f15758"></div><div class="abs" style="left:79px;top:0;width:1px;height:75px;background:#fbd3d1"></div><div class="abs" style="left:159px;top:0;width:1px;height:75px;background:#fbd3d1"></div><div class="abs" style="left:239px;top:0;width:1px;height:75px;background:#fbd3d1"></div><svg class="abs" style="left:24px;top:30px" width="16" height="14" viewBox="0 0 16 14"><rect width="16" height="14" fill="#b8393c"/><rect x="2" y="2.5" width="1.8" height="9.5" fill="#f15758"/><rect x="6.0" y="3.0" width="1.6" height="1.5" fill="#f15758"/><rect x="6.0" y="5.5" width="1.6" height="1.5" fill="#f15758"/><rect x="6.0" y="8.0" width="1.6" height="1.5" fill="#f15758"/><rect x="6.0" y="10.5" width="1.6" height="1.5" fill="#f15758"/><rect x="9.4" y="3.0" width="1.6" height="1.5" fill="#f15758"/><rect x="9.4" y="5.5" width="1.6" height="1.5" fill="#f15758"/><rect x="9.4" y="8.0" width="1.6" height="1.5" fill="#f15758"/><rect x="9.4" y="10.5" width="1.6" height="1.5" fill="#f15758"/><rect x="12.8" y="3.0" width="1.6" height="1.5" fill="#f15758"/><rect x="12.8" y="5.5" width="1.6" height="1.5" fill="#f15758"/><rect x="12.8" y="8.0" width="1.6" height="1.5" fill="#f15758"/><rect x="12.8" y="10.5" width="1.6" height="1.5" fill="#f15758"/></svg><div class="t" style="left:45px;top:29px;font-size:18px;color:#b8393c">B</div><svg class="abs" style="left:104px;top:30px" width="16" height="14" viewBox="0 0 16 14"><rect width="16" height="14" fill="#d27573"/><rect x="2" y="2.5" width="1.8" height="9.5" fill="#f58a87"/><rect x="6.0" y="3.0" width="1.6" height="1.5" fill="#f58a87"/><rect x="6.0" y="5.5" width="1.6" height="1.5" fill="#f58a87"/><rect x="6.0" y="8.0" width="1.6" height="1.5" fill="#f58a87"/><rect x="6.0" y="10.5" width="1.6" height="1.5" fill="#f58a87"/><rect x="9.4" y="3.0" width="1.6" height="1.5" fill="#f58a87"/><rect x="9.4" y="5.5" width="1.6" height="1.5" fill="#f58a87"/><rect x="9.4" y="8.0" width="1.6" height="1.5" fill="#f58a87"/><rect x="9.4" y="10.5" width="1.6" height="1.5" fill="#f58a87"/><rect x="12.8" y="3.0" width="1.6" height="1.5" fill="#f58a87"/><rect x="12.8" y="5.5" width="1.6" height="1.5" fill="#f58a87"/><rect x="12.8" y="8.0" width="1.6" height="1.5" fill="#f58a87"/><rect x="12.8" y="10.5" width="1.6" height="1.5" fill="#f58a87"/></svg><div class="t" style="left:125px;top:29px;font-size:18px;color:#d27573">B</div><svg class="abs" style="left:184px;top:30px" width="16" height="14" viewBox="0 0 16 14"><rect width="16" height="14" fill="#d27573"/><rect x="2" y="2.5" width="1.8" height="9.5" fill="#f58a87"/><rect x="6.0" y="3.0" width="1.6" height="1.5" fill="#f58a87"/><rect x="6.0" y="5.5" width="1.6" height="1.5" fill="#f58a87"/><rect x="6.0" y="8.0" width="1.6" height="1.5" fill="#f58a87"/><rect x="6.0" y="10.5" width="1.6" height="1.5" fill="#f58a87"/><rect x="9.4" y="3.0" width="1.6" height="1.5" fill="#f58a87"/><rect x="9.4" y="5.5" width="1.6" height="1.5" fill="#f58a87"/><rect x="9.4" y="8.0" width="1.6" height="1.5" fill="#f58a87"/><rect x="9.4" y="10.5" width="1.6" height="1.5" fill="#f58a87"/><rect x="12.8" y="3.0" width="1.6" height="1.5" fill="#f58a87"/><rect x="12.8" y="5.5" width="1.6" height="1.5" fill="#f58a87"/><rect x="12.8" y="8.0" width="1.6" height="1.5" fill="#f58a87"/><rect x="12.8" y="10.5" width="1.6" height="1.5" fill="#f58a87"/></svg><div class="t" style="left:205px;top:29px;font-size:18px;color:#d27573">B</div><svg class="abs" style="left:264px;top:30px" width="16" height="14" viewBox="0 0 16 14"><rect width="16" height="14" fill="#d27573"/><rect x="2" y="2.5" width="1.8" height="9.5" fill="#f58a87"/><rect x="6.0" y="3.0" width="1.6" height="1.5" fill="#f58a87"/><rect x="6.0" y="5.5" width="1.6" height="1.5" fill="#f58a87"/><rect x="6.0" y="8.0" width="1.6" height="1.5" fill="#f58a87"/><rect x="6.0" y="10.5" width="1.6" height="1.5" fill="#f58a87"/><rect x="9.4" y="3.0" width="1.6" height="1.5" fill="#f58a87"/><rect x="9.4" y="5.5" width="1.6" height="1.5" fill="#f58a87"/><rect x="9.4" y="8.0" width="1.6" height="1.5" fill="#f58a87"/><rect x="9.4" y="10.5" width="1.6" height="1.5" fill="#f58a87"/><rect x="12.8" y="3.0" width="1.6" height="1.5" fill="#f58a87"/><rect x="12.8" y="5.5" width="1.6" height="1.5" fill="#f58a87"/><rect x="12.8" y="8.0" width="1.6" height="1.5" fill="#f58a87"/><rect x="12.8" y="10.5" width="1.6" height="1.5" fill="#f58a87"/></svg><div class="t" style="left:285px;top:29px;font-size:18px;color:#d27573">B</div><div class="abs" style="left:3px;top:4px;width:75px;height:16px;border-radius:5px;background:#8d3a3e"></div><div class="t" style="left:7px;top:6px;font-size:12px;color:#f3e3e3;transform:scaleX(0.86);transform-origin:0 0">Drum Machine</div></div><div class="abs" style="left:288px;top:222px;width:319px;height:75px;border-radius:4px;overflow:hidden;background:#4d9dd7"><svg class="abs" style="left:0;top:0" width="319" height="75" viewBox="0 0 319 75"><path d="M0.0,35.16 L1.0,34.95 L2.0,34.82 L3.0,34.80 L4.0,34.88 L5.0,35.02 L6.0,35.14 L7.0,35.20 L8.0,35.18 L9.0,35.11 L10.0,35.04 L11.0,35.04 L12.0,35.12 L13.0,35.28 L14.0,35.45 L15.0,35.57 L16.0,35.60 L17.0,35.52 L18.0,35.36 L19.0,35.19 L20.0,35.07 L21.0,35.03 L22.0,35.07 L23.0,35.13 L24.0,35.17 L25.0,35.13 L26.0,35.01 L27.0,34.84 L28.0,34.71 L29.0,34.65 L30.0,34.72 L31.0,34.89 L32.0,35.10 L33.0,35.30 L34.0,35.43 L35.0,35.48 L36.0,35.48 L37.0,35.49 L38.0,35.56 L39.0,35.72 L40.0,35.95 L41.0,36.18 L42.0,36.36 L43.0,36.42 L44.0,36.38 L45.0,36.25 L46.0,36.11 L47.0,36.02 L48.0,36.00 L49.0,36.04 L50.0,36.10 L51.0,36.11 L52.0,36.04 L53.0,35.88 L54.0,35.67 L55.0,35.49 L56.0,35.39 L57.0,35.40 L58.0,35.50 L59.0,35.64 L60.0,35.75 L61.0,35.80 L62.0,35.76 L63.0,35.68 L64.0,35.61 L65.0,35.61 L66.0,35.69 L67.0,35.84 L68.0,35.99 L69.0,36.09 L70.0,36.08 L71.0,35.95 L72.0,35.76 L73.0,35.56 L74.0,35.41 L75.0,35.34 L76.0,35.34 L77.0,35.35 L78.0,35.31 L79.0,35.20 L80.0,35.00 L81.0,34.77 L82.0,34.57 L83.0,34.46 L84.0,34.47 L85.0,34.58 L86.0,34.73 L87.0,34.85 L88.0,34.92 L89.0,34.91 L90.0,34.87 L91.0,34.85 L92.0,34.91 L93.0,35.07 L94.0,35.29 L95.0,35.52 L96.0,35.69 L97.0,35.75 L98.0,35.71 L99.0,35.61 L100.0,35.50 L101.0,35.45 L102.0,35.48 L103.0,35.56 L104.0,35.66 L105.0,35.70 L106.0,35.65 L107.0,35.51 L108.0,35.35 L109.0,35.21 L110.0,35.16 L111.0,35.22 L112.0,35.38 L113.0,35.56 L114.0,35.71 L115.0,35.79 L116.0,35.79 L117.0,35.76 L118.0,35.75 L119.0,35.82 L120.0,35.97 L121.0,36.18 L122.0,36.39 L123.0,36.53 L124.0,36.56 L125.0,36.47 L126.0,36.32 L127.0,36.17 L128.0,36.06 L129.0,36.04 L130.0,36.06 L131.0,36.08 L132.0,36.03 L133.0,35.89 L134.0,35.67 L135.0,35.42 L136.0,35.19 L137.0,35.06 L138.0,35.04 L139.0,35.11 L140.0,35.21 L141.0,35.27 L142.0,35.26 L143.0,35.19 L144.0,35.09 L145.0,35.02 L146.0,35.04 L147.0,35.15 L148.0,35.33 L149.0,35.51 L150.0,35.62 L151.0,35.62 L152.0,35.53 L153.0,35.38 L154.0,35.24 L155.0,35.16 L156.0,35.16 L157.0,35.21 L158.0,35.26 L159.0,35.25 L160.0,35.15 L161.0,34.98 L162.0,34.78 L163.0,34.62 L164.0,34.55 L165.0,34.61 L166.0,34.75 L167.0,34.91 L168.0,35.05 L169.0,35.11 L170.0,35.11 L171.0,35.09 L172.0,35.11 L173.0,35.21 L174.0,35.42 L175.0,35.68 L176.0,35.93 L177.0,36.11 L178.0,36.18 L179.0,36.16 L180.0,36.07 L181.0,35.99 L182.0,35.97 L183.0,36.03 L184.0,36.12 L185.0,36.20 L186.0,36.21 L187.0,36.11 L188.0,35.93 L189.0,35.73 L190.0,35.56 L191.0,35.48 L192.0,35.50 L193.0,35.61 L194.0,35.72 L195.0,35.80 L196.0,35.79 L197.0,35.72 L198.0,35.64 L199.0,35.59 L200.0,35.63 L201.0,35.76 L202.0,35.95 L203.0,36.12 L204.0,36.22 L205.0,36.21 L206.0,36.09 L207.0,35.93 L208.0,35.78 L209.0,35.70 L210.0,35.68 L211.0,35.71 L212.0,35.72 L213.0,35.65 L214.0,35.49 L215.0,35.25 L216.0,34.98 L217.0,34.77 L218.0,34.65 L219.0,34.64 L220.0,34.72 L221.0,34.81 L222.0,34.86 L223.0,34.84 L224.0,34.76 L225.0,34.68 L226.0,34.66 L227.0,34.73 L228.0,34.90 L229.0,35.13 L230.0,35.35 L231.0,35.50 L232.0,35.54 L233.0,35.50 L234.0,35.41 L235.0,35.34 L236.0,35.35 L237.0,35.42 L238.0,35.54 L239.0,35.63 L240.0,35.65 L241.0,35.56 L242.0,35.40 L243.0,35.22 L244.0,35.09 L245.0,35.05 L246.0,35.12 L247.0,35.26 L248.0,35.41 L249.0,35.51 L250.0,35.53 L251.0,35.50 L252.0,35.46 L253.0,35.48 L254.0,35.58 L255.0,35.79 L256.0,36.03 L257.0,36.26 L258.0,36.41 L259.0,36.45 L260.0,36.39 L261.0,36.29 L262.0,36.21 L263.0,36.20 L264.0,36.24 L265.0,36.32 L266.0,36.36 L267.0,36.31 L268.0,36.16 L269.0,35.92 L270.0,35.67 L271.0,35.46 L272.0,35.35 L273.0,35.34 L274.0,35.39 L275.0,35.44 L276.0,35.45 L277.0,35.37 L278.0,35.25 L279.0,35.12 L280.0,35.06 L281.0,35.10 L282.0,35.23 L283.0,35.42 L284.0,35.58 L285.0,35.67 L286.0,35.66 L287.0,35.56 L288.0,35.42 L289.0,35.33 L290.0,35.30 L291.0,35.34 L292.0,35.41 L293.0,35.45 L294.0,35.40 L295.0,35.26 L296.0,35.04 L297.0,34.82 L298.0,34.65 L299.0,34.58 L300.0,34.62 L301.0,34.72 L302.0,34.82 L303.0,34.88 L304.0,34.86 L305.0,34.80 L306.0,34.75 L307.0,34.77 L308.0,34.89 L309.0,35.11 L310.0,35.38 L311.0,35.63 L312.0,35.80 L313.0,35.86 L314.0,35.84 L315.0,35.80 L316.0,35.79 L317.0,35.84 L318.0,35.96 L319.0,36.10 L319.0,38.90 L318.0,39.04 L317.0,39.16 L316.0,39.21 L315.0,39.20 L314.0,39.16 L313.0,39.14 L312.0,39.20 L311.0,39.37 L310.0,39.62 L309.0,39.89 L308.0,40.11 L307.0,40.23 L306.0,40.25 L305.0,40.20 L304.0,40.14 L303.0,40.12 L302.0,40.18 L301.0,40.28 L300.0,40.38 L299.0,40.42 L298.0,40.35 L297.0,40.18 L296.0,39.96 L295.0,39.74 L294.0,39.60 L293.0,39.55 L292.0,39.59 L291.0,39.66 L290.0,39.70 L289.0,39.67 L288.0,39.58 L287.0,39.44 L286.0,39.34 L285.0,39.33 L284.0,39.42 L283.0,39.58 L282.0,39.77 L281.0,39.90 L280.0,39.94 L279.0,39.88 L278.0,39.75 L277.0,39.63 L276.0,39.55 L275.0,39.56 L274.0,39.61 L273.0,39.66 L272.0,39.65 L271.0,39.54 L270.0,39.33 L269.0,39.08 L268.0,38.84 L267.0,38.69 L266.0,38.64 L265.0,38.68 L264.0,38.76 L263.0,38.80 L262.0,38.79 L261.0,38.71 L260.0,38.61 L259.0,38.55 L258.0,38.59 L257.0,38.74 L256.0,38.97 L255.0,39.21 L254.0,39.42 L253.0,39.52 L252.0,39.54 L251.0,39.50 L250.0,39.47 L249.0,39.49 L248.0,39.59 L247.0,39.74 L246.0,39.88 L245.0,39.95 L244.0,39.91 L243.0,39.78 L242.0,39.60 L241.0,39.44 L240.0,39.35 L239.0,39.37 L238.0,39.46 L237.0,39.58 L236.0,39.65 L235.0,39.66 L234.0,39.59 L233.0,39.50 L232.0,39.46 L231.0,39.50 L230.0,39.65 L229.0,39.87 L228.0,40.10 L227.0,40.27 L226.0,40.34 L225.0,40.32 L224.0,40.24 L223.0,40.16 L222.0,40.14 L221.0,40.19 L220.0,40.28 L219.0,40.36 L218.0,40.35 L217.0,40.23 L216.0,40.02 L215.0,39.75 L214.0,39.51 L213.0,39.35 L212.0,39.28 L211.0,39.29 L210.0,39.32 L209.0,39.30 L208.0,39.22 L207.0,39.07 L206.0,38.91 L205.0,38.79 L204.0,38.78 L203.0,38.88 L202.0,39.05 L201.0,39.24 L200.0,39.37 L199.0,39.41 L198.0,39.36 L197.0,39.28 L196.0,39.21 L195.0,39.20 L194.0,39.28 L193.0,39.39 L192.0,39.50 L191.0,39.52 L190.0,39.44 L189.0,39.27 L188.0,39.07 L187.0,38.89 L186.0,38.79 L185.0,38.80 L184.0,38.88 L183.0,38.97 L182.0,39.03 L181.0,39.01 L180.0,38.93 L179.0,38.84 L178.0,38.82 L177.0,38.89 L176.0,39.07 L175.0,39.32 L174.0,39.58 L173.0,39.79 L172.0,39.89 L171.0,39.91 L170.0,39.89 L169.0,39.89 L168.0,39.95 L167.0,40.09 L166.0,40.25 L165.0,40.39 L164.0,40.45 L163.0,40.38 L162.0,40.22 L161.0,40.02 L160.0,39.85 L159.0,39.75 L158.0,39.74 L157.0,39.79 L156.0,39.84 L155.0,39.84 L154.0,39.76 L153.0,39.62 L152.0,39.47 L151.0,39.38 L150.0,39.38 L149.0,39.49 L148.0,39.67 L147.0,39.85 L146.0,39.96 L145.0,39.98 L144.0,39.91 L143.0,39.81 L142.0,39.74 L141.0,39.73 L140.0,39.79 L139.0,39.89 L138.0,39.96 L137.0,39.94 L136.0,39.81 L135.0,39.58 L134.0,39.33 L133.0,39.11 L132.0,38.97 L131.0,38.92 L130.0,38.94 L129.0,38.96 L128.0,38.94 L127.0,38.83 L126.0,38.68 L125.0,38.53 L124.0,38.44 L123.0,38.47 L122.0,38.61 L121.0,38.82 L120.0,39.03 L119.0,39.18 L118.0,39.25 L117.0,39.24 L116.0,39.21 L115.0,39.21 L114.0,39.29 L113.0,39.44 L112.0,39.62 L111.0,39.78 L110.0,39.84 L109.0,39.79 L108.0,39.65 L107.0,39.49 L106.0,39.35 L105.0,39.30 L104.0,39.34 L103.0,39.44 L102.0,39.52 L101.0,39.55 L100.0,39.50 L99.0,39.39 L98.0,39.29 L97.0,39.25 L96.0,39.31 L95.0,39.48 L94.0,39.71 L93.0,39.93 L92.0,40.09 L91.0,40.15 L90.0,40.13 L89.0,40.09 L88.0,40.08 L87.0,40.15 L86.0,40.27 L85.0,40.42 L84.0,40.53 L83.0,40.54 L82.0,40.43 L81.0,40.23 L80.0,40.00 L79.0,39.80 L78.0,39.69 L77.0,39.65 L76.0,39.66 L75.0,39.66 L74.0,39.59 L73.0,39.44 L72.0,39.24 L71.0,39.05 L70.0,38.92 L69.0,38.91 L68.0,39.01 L67.0,39.16 L66.0,39.31 L65.0,39.39 L64.0,39.39 L63.0,39.32 L62.0,39.24 L61.0,39.20 L60.0,39.25 L59.0,39.36 L58.0,39.50 L57.0,39.60 L56.0,39.61 L55.0,39.51 L54.0,39.33 L53.0,39.12 L52.0,38.96 L51.0,38.89 L50.0,38.90 L49.0,38.96 L48.0,39.00 L47.0,38.98 L46.0,38.89 L45.0,38.75 L44.0,38.62 L43.0,38.58 L42.0,38.64 L41.0,38.82 L40.0,39.05 L39.0,39.28 L38.0,39.44 L37.0,39.51 L36.0,39.52 L35.0,39.52 L34.0,39.57 L33.0,39.70 L32.0,39.90 L31.0,40.11 L30.0,40.28 L29.0,40.35 L28.0,40.29 L27.0,40.16 L26.0,39.99 L25.0,39.87 L24.0,39.83 L23.0,39.87 L22.0,39.93 L21.0,39.97 L20.0,39.93 L19.0,39.81 L18.0,39.64 L17.0,39.48 L16.0,39.40 L15.0,39.43 L14.0,39.55 L13.0,39.72 L12.0,39.88 L11.0,39.96 L10.0,39.96 L9.0,39.89 L8.0,39.82 L7.0,39.80 L6.0,39.86 L5.0,39.98 L4.0,40.12 L3.0,40.20 L2.0,40.18 L1.0,40.05 L0.0,39.84Z" fill="#2f6694"/></svg><div class="abs" style="left:3px;top:4px;width:70px;height:16px;border-radius:5px;background:#4b8fc7"></div><div class="t" style="left:7px;top:6px;font-size:12px;color:#f4f4f4;transform:scaleX(0.84);transform-origin:0 0">Ritual Bass 01</div></div><div class="abs" style="left:607px;top:222px;width:320px;height:75px;border-radius:4px;overflow:hidden;background:#4d9dd7"><svg class="abs" style="left:0;top:0" width="320" height="75" viewBox="0 0 320 75"><path d="M0.0,35.49 L1.0,35.56 L2.0,35.72 L3.0,35.95 L4.0,36.18 L5.0,36.36 L6.0,36.42 L7.0,36.38 L8.0,36.25 L9.0,36.11 L10.0,36.02 L11.0,36.00 L12.0,36.04 L13.0,36.10 L14.0,36.11 L15.0,36.04 L16.0,35.88 L17.0,35.67 L18.0,35.49 L19.0,35.39 L20.0,35.40 L21.0,35.50 L22.0,35.64 L23.0,35.75 L24.0,35.80 L25.0,35.76 L26.0,35.68 L27.0,35.61 L28.0,35.61 L29.0,35.69 L30.0,35.84 L31.0,35.99 L32.0,36.09 L33.0,36.08 L34.0,35.95 L35.0,35.76 L36.0,35.56 L37.0,35.41 L38.0,35.34 L39.0,35.34 L40.0,35.35 L41.0,35.31 L42.0,35.20 L43.0,35.00 L44.0,34.77 L45.0,34.57 L46.0,34.46 L47.0,34.47 L48.0,34.58 L49.0,34.73 L50.0,34.85 L51.0,34.92 L52.0,34.91 L53.0,34.87 L54.0,34.85 L55.0,34.91 L56.0,35.07 L57.0,35.29 L58.0,35.52 L59.0,35.69 L60.0,35.75 L61.0,35.71 L62.0,35.61 L63.0,35.50 L64.0,35.45 L65.0,35.48 L66.0,35.56 L67.0,35.66 L68.0,35.70 L69.0,35.65 L70.0,35.51 L71.0,35.35 L72.0,35.21 L73.0,35.16 L74.0,35.22 L75.0,35.38 L76.0,35.56 L77.0,35.71 L78.0,35.79 L79.0,35.79 L80.0,35.76 L81.0,35.75 L82.0,35.82 L83.0,35.97 L84.0,36.18 L85.0,36.39 L86.0,36.53 L87.0,36.56 L88.0,36.47 L89.0,36.32 L90.0,36.17 L91.0,36.06 L92.0,36.04 L93.0,36.06 L94.0,36.08 L95.0,36.03 L96.0,35.89 L97.0,35.67 L98.0,35.42 L99.0,35.19 L100.0,35.06 L101.0,35.04 L102.0,35.11 L103.0,35.21 L104.0,35.27 L105.0,35.26 L106.0,35.19 L107.0,35.09 L108.0,35.02 L109.0,35.04 L110.0,35.15 L111.0,35.33 L112.0,35.51 L113.0,35.62 L114.0,35.62 L115.0,35.53 L116.0,35.38 L117.0,35.24 L118.0,35.16 L119.0,35.16 L120.0,35.21 L121.0,35.26 L122.0,35.25 L123.0,35.15 L124.0,34.98 L125.0,34.78 L126.0,34.62 L127.0,34.55 L128.0,34.61 L129.0,34.75 L130.0,34.91 L131.0,35.05 L132.0,35.11 L133.0,35.11 L134.0,35.09 L135.0,35.11 L136.0,35.21 L137.0,35.42 L138.0,35.68 L139.0,35.93 L140.0,36.11 L141.0,36.18 L142.0,36.16 L143.0,36.07 L144.0,35.99 L145.0,35.97 L146.0,36.03 L147.0,36.12 L148.0,36.20 L149.0,36.21 L150.0,36.11 L151.0,35.93 L152.0,35.73 L153.0,35.56 L154.0,35.48 L155.0,35.50 L156.0,35.61 L157.0,35.72 L158.0,35.80 L159.0,35.79 L160.0,35.72 L161.0,35.64 L162.0,35.59 L163.0,35.63 L164.0,35.76 L165.0,35.95 L166.0,36.12 L167.0,36.22 L168.0,36.21 L169.0,36.09 L170.0,35.93 L171.0,35.78 L172.0,35.70 L173.0,35.68 L174.0,35.71 L175.0,35.72 L176.0,35.65 L177.0,35.49 L178.0,35.25 L179.0,34.98 L180.0,34.77 L181.0,34.65 L182.0,34.64 L183.0,34.72 L184.0,34.81 L185.0,34.86 L186.0,34.84 L187.0,34.76 L188.0,34.68 L189.0,34.66 L190.0,34.73 L191.0,34.90 L192.0,35.13 L193.0,35.35 L194.0,35.50 L195.0,35.54 L196.0,35.50 L197.0,35.41 L198.0,35.34 L199.0,35.35 L200.0,35.42 L201.0,35.54 L202.0,35.63 L203.0,35.65 L204.0,35.56 L205.0,35.40 L206.0,35.22 L207.0,35.09 L208.0,35.05 L209.0,35.12 L210.0,35.26 L211.0,35.41 L212.0,35.51 L213.0,35.53 L214.0,35.50 L215.0,35.46 L216.0,35.48 L217.0,35.58 L218.0,35.79 L219.0,36.03 L220.0,36.26 L221.0,36.41 L222.0,36.45 L223.0,36.39 L224.0,36.29 L225.0,36.21 L226.0,36.20 L227.0,36.24 L228.0,36.32 L229.0,36.36 L230.0,36.31 L231.0,36.16 L232.0,35.92 L233.0,35.67 L234.0,35.46 L235.0,35.35 L236.0,35.34 L237.0,35.39 L238.0,35.44 L239.0,35.45 L240.0,35.37 L241.0,35.25 L242.0,35.12 L243.0,35.06 L244.0,35.10 L245.0,35.23 L246.0,35.42 L247.0,35.58 L248.0,35.67 L249.0,35.66 L250.0,35.56 L251.0,35.42 L252.0,35.33 L253.0,35.30 L254.0,35.34 L255.0,35.41 L256.0,35.45 L257.0,35.40 L258.0,35.26 L259.0,35.04 L260.0,34.82 L261.0,34.65 L262.0,34.58 L263.0,34.62 L264.0,34.72 L265.0,34.82 L266.0,34.88 L267.0,34.86 L268.0,34.80 L269.0,34.75 L270.0,34.77 L271.0,34.89 L272.0,35.11 L273.0,35.38 L274.0,35.63 L275.0,35.80 L276.0,35.86 L277.0,35.84 L278.0,35.80 L279.0,35.79 L280.0,35.84 L281.0,35.96 L282.0,36.10 L283.0,36.20 L284.0,36.20 L285.0,36.10 L286.0,35.92 L287.0,35.72 L288.0,35.58 L289.0,35.54 L290.0,35.58 L291.0,35.68 L292.0,35.77 L293.0,35.79 L294.0,35.74 L295.0,35.65 L296.0,35.55 L297.0,35.53 L298.0,35.61 L299.0,35.78 L300.0,35.99 L301.0,36.17 L302.0,36.26 L303.0,36.25 L304.0,36.15 L305.0,36.04 L306.0,35.96 L307.0,35.94 L308.0,35.99 L309.0,36.05 L310.0,36.07 L311.0,35.99 L312.0,35.80 L313.0,35.54 L314.0,35.27 L315.0,35.06 L316.0,34.95 L317.0,34.94 L318.0,34.98 L319.0,35.01 L320.0,34.97 L320.0,40.03 L319.0,39.99 L318.0,40.02 L317.0,40.06 L316.0,40.05 L315.0,39.94 L314.0,39.73 L313.0,39.46 L312.0,39.20 L311.0,39.01 L310.0,38.93 L309.0,38.95 L308.0,39.01 L307.0,39.06 L306.0,39.04 L305.0,38.96 L304.0,38.85 L303.0,38.75 L302.0,38.74 L301.0,38.83 L300.0,39.01 L299.0,39.22 L298.0,39.39 L297.0,39.47 L296.0,39.45 L295.0,39.35 L294.0,39.26 L293.0,39.21 L292.0,39.23 L291.0,39.32 L290.0,39.42 L289.0,39.46 L288.0,39.42 L287.0,39.28 L286.0,39.08 L285.0,38.90 L284.0,38.80 L283.0,38.80 L282.0,38.90 L281.0,39.04 L280.0,39.16 L279.0,39.21 L278.0,39.20 L277.0,39.16 L276.0,39.14 L275.0,39.20 L274.0,39.37 L273.0,39.62 L272.0,39.89 L271.0,40.11 L270.0,40.23 L269.0,40.25 L268.0,40.20 L267.0,40.14 L266.0,40.12 L265.0,40.18 L264.0,40.28 L263.0,40.38 L262.0,40.42 L261.0,40.35 L260.0,40.18 L259.0,39.96 L258.0,39.74 L257.0,39.60 L256.0,39.55 L255.0,39.59 L254.0,39.66 L253.0,39.70 L252.0,39.67 L251.0,39.58 L250.0,39.44 L249.0,39.34 L248.0,39.33 L247.0,39.42 L246.0,39.58 L245.0,39.77 L244.0,39.90 L243.0,39.94 L242.0,39.88 L241.0,39.75 L240.0,39.63 L239.0,39.55 L238.0,39.56 L237.0,39.61 L236.0,39.66 L235.0,39.65 L234.0,39.54 L233.0,39.33 L232.0,39.08 L231.0,38.84 L230.0,38.69 L229.0,38.64 L228.0,38.68 L227.0,38.76 L226.0,38.80 L225.0,38.79 L224.0,38.71 L223.0,38.61 L222.0,38.55 L221.0,38.59 L220.0,38.74 L219.0,38.97 L218.0,39.21 L217.0,39.42 L216.0,39.52 L215.0,39.54 L214.0,39.50 L213.0,39.47 L212.0,39.49 L211.0,39.59 L210.0,39.74 L209.0,39.88 L208.0,39.95 L207.0,39.91 L206.0,39.78 L205.0,39.60 L204.0,39.44 L203.0,39.35 L202.0,39.37 L201.0,39.46 L200.0,39.58 L199.0,39.65 L198.0,39.66 L197.0,39.59 L196.0,39.50 L195.0,39.46 L194.0,39.50 L193.0,39.65 L192.0,39.87 L191.0,40.10 L190.0,40.27 L189.0,40.34 L188.0,40.32 L187.0,40.24 L186.0,40.16 L185.0,40.14 L184.0,40.19 L183.0,40.28 L182.0,40.36 L181.0,40.35 L180.0,40.23 L179.0,40.02 L178.0,39.75 L177.0,39.51 L176.0,39.35 L175.0,39.28 L174.0,39.29 L173.0,39.32 L172.0,39.30 L171.0,39.22 L170.0,39.07 L169.0,38.91 L168.0,38.79 L167.0,38.78 L166.0,38.88 L165.0,39.05 L164.0,39.24 L163.0,39.37 L162.0,39.41 L161.0,39.36 L160.0,39.28 L159.0,39.21 L158.0,39.20 L157.0,39.28 L156.0,39.39 L155.0,39.50 L154.0,39.52 L153.0,39.44 L152.0,39.27 L151.0,39.07 L150.0,38.89 L149.0,38.79 L148.0,38.80 L147.0,38.88 L146.0,38.97 L145.0,39.03 L144.0,39.01 L143.0,38.93 L142.0,38.84 L141.0,38.82 L140.0,38.89 L139.0,39.07 L138.0,39.32 L137.0,39.58 L136.0,39.79 L135.0,39.89 L134.0,39.91 L133.0,39.89 L132.0,39.89 L131.0,39.95 L130.0,40.09 L129.0,40.25 L128.0,40.39 L127.0,40.45 L126.0,40.38 L125.0,40.22 L124.0,40.02 L123.0,39.85 L122.0,39.75 L121.0,39.74 L120.0,39.79 L119.0,39.84 L118.0,39.84 L117.0,39.76 L116.0,39.62 L115.0,39.47 L114.0,39.38 L113.0,39.38 L112.0,39.49 L111.0,39.67 L110.0,39.85 L109.0,39.96 L108.0,39.98 L107.0,39.91 L106.0,39.81 L105.0,39.74 L104.0,39.73 L103.0,39.79 L102.0,39.89 L101.0,39.96 L100.0,39.94 L99.0,39.81 L98.0,39.58 L97.0,39.33 L96.0,39.11 L95.0,38.97 L94.0,38.92 L93.0,38.94 L92.0,38.96 L91.0,38.94 L90.0,38.83 L89.0,38.68 L88.0,38.53 L87.0,38.44 L86.0,38.47 L85.0,38.61 L84.0,38.82 L83.0,39.03 L82.0,39.18 L81.0,39.25 L80.0,39.24 L79.0,39.21 L78.0,39.21 L77.0,39.29 L76.0,39.44 L75.0,39.62 L74.0,39.78 L73.0,39.84 L72.0,39.79 L71.0,39.65 L70.0,39.49 L69.0,39.35 L68.0,39.30 L67.0,39.34 L66.0,39.44 L65.0,39.52 L64.0,39.55 L63.0,39.50 L62.0,39.39 L61.0,39.29 L60.0,39.25 L59.0,39.31 L58.0,39.48 L57.0,39.71 L56.0,39.93 L55.0,40.09 L54.0,40.15 L53.0,40.13 L52.0,40.09 L51.0,40.08 L50.0,40.15 L49.0,40.27 L48.0,40.42 L47.0,40.53 L46.0,40.54 L45.0,40.43 L44.0,40.23 L43.0,40.00 L42.0,39.80 L41.0,39.69 L40.0,39.65 L39.0,39.66 L38.0,39.66 L37.0,39.59 L36.0,39.44 L35.0,39.24 L34.0,39.05 L33.0,38.92 L32.0,38.91 L31.0,39.01 L30.0,39.16 L29.0,39.31 L28.0,39.39 L27.0,39.39 L26.0,39.32 L25.0,39.24 L24.0,39.20 L23.0,39.25 L22.0,39.36 L21.0,39.50 L20.0,39.60 L19.0,39.61 L18.0,39.51 L17.0,39.33 L16.0,39.12 L15.0,38.96 L14.0,38.89 L13.0,38.90 L12.0,38.96 L11.0,39.00 L10.0,38.98 L9.0,38.89 L8.0,38.75 L7.0,38.62 L6.0,38.58 L5.0,38.64 L4.0,38.82 L3.0,39.05 L2.0,39.28 L1.0,39.44 L0.0,39.51Z" fill="#2f6694"/></svg><div class="abs" style="left:3px;top:4px;width:70px;height:16px;border-radius:5px;background:#4b8fc7"></div><div class="t" style="left:7px;top:6px;font-size:12px;color:#f4f4f4;transform:scaleX(0.84);transform-origin:0 0">Ritual Bass 01</div></div><div class="abs" style="left:606px;top:224px;width:1px;height:71px;background:#6aaee0"></div><div class="abs" style="left:607px;top:302px;width:160px;height:75px;border-radius:4px;overflow:hidden;background:#c15abf"><svg class="abs" style="left:0;top:0" width="160" height="75" viewBox="0 0 160 75"><path d="M0.0,34.75 L1.0,34.58 L2.0,34.91 L3.0,34.90 L4.0,34.98 L5.0,35.71 L6.0,36.17 L7.0,35.65 L8.0,35.17 L9.0,35.17 L10.0,35.03 L11.0,34.68 L12.0,35.02 L13.0,35.68 L14.0,35.49 L15.0,34.77 L16.0,34.56 L17.0,34.47 L18.0,33.96 L19.0,33.85 L20.0,34.52 L21.0,34.82 L22.0,34.28 L23.0,33.89 L24.0,33.82 L25.0,33.31 L26.0,32.75 L27.0,33.12 L28.0,33.75 L29.0,33.58 L30.0,33.16 L31.0,33.37 L32.0,33.30 L33.0,32.74 L34.0,32.83 L35.0,33.71 L36.0,34.18 L37.0,34.10 L38.0,34.32 L39.0,34.02 L40.0,33.01 L41.0,32.08 L42.0,32.13 L43.0,32.34 L44.0,31.93 L45.0,31.61 L46.0,31.58 L47.0,31.62 L48.0,31.15 L49.0,31.42 L50.0,32.33 L51.0,32.84 L52.0,33.19 L53.0,34.00 L54.0,34.25 L55.0,33.62 L56.0,33.16 L57.0,33.55 L58.0,33.91 L59.0,33.93 L60.0,34.40 L61.0,35.05 L62.0,34.83 L63.0,34.15 L64.0,34.10 L65.0,34.41 L66.0,34.33 L67.0,34.50 L68.0,35.27 L69.0,35.55 L70.0,34.94 L71.0,34.56 L72.0,34.75 L73.0,34.68 L74.0,34.29 L75.0,34.66 L76.0,35.14 L77.0,34.69 L78.0,33.91 L79.0,33.68 L80.0,33.42 L81.0,32.80 L82.0,32.77 L83.0,33.41 L84.0,33.57 L85.0,33.00 L86.0,32.72 L87.0,32.65 L88.0,32.08 L89.0,31.67 L90.0,32.19 L91.0,32.75 L92.0,32.49 L93.0,32.15 L94.0,32.62 L95.0,32.66 L96.0,32.36 L97.0,32.85 L98.0,33.98 L99.0,34.55 L100.0,34.70 L101.0,34.80 L102.0,34.72 L103.0,33.93 L104.0,33.46 L105.0,33.95 L106.0,34.37 L107.0,34.22 L108.0,34.29 L109.0,34.54 L110.0,34.02 L111.0,33.20 L112.0,33.23 L113.0,33.72 L114.0,33.74 L115.0,33.74 L116.0,34.18 L117.0,34.13 L118.0,33.27 L119.0,32.86 L120.0,33.22 L121.0,33.40 L122.0,33.34 L123.0,33.81 L124.0,34.28 L125.0,33.79 L126.0,33.07 L127.0,33.10 L128.0,33.31 L129.0,33.21 L130.0,33.50 L131.0,34.28 L132.0,34.38 L133.0,33.72 L134.0,33.46 L135.0,33.66 L136.0,33.52 L137.0,33.48 L138.0,34.21 L139.0,34.77 L140.0,34.37 L141.0,33.87 L142.0,33.90 L143.0,33.76 L144.0,33.36 L145.0,33.69 L146.0,34.52 L147.0,34.61 L148.0,34.13 L149.0,34.34 L150.0,34.61 L151.0,34.38 L152.0,34.51 L153.0,35.54 L154.0,36.37 L155.0,36.40 L156.0,36.51 L157.0,36.90 L158.0,36.76 L159.0,36.44 L160.0,37.05 L160.0,37.95 L159.0,38.56 L158.0,38.24 L157.0,38.10 L156.0,38.49 L155.0,38.60 L154.0,38.63 L153.0,39.46 L152.0,40.49 L151.0,40.62 L150.0,40.39 L149.0,40.66 L148.0,40.87 L147.0,40.39 L146.0,40.48 L145.0,41.31 L144.0,41.64 L143.0,41.24 L142.0,41.10 L141.0,41.13 L140.0,40.63 L139.0,40.23 L138.0,40.79 L137.0,41.52 L136.0,41.48 L135.0,41.34 L134.0,41.54 L133.0,41.28 L132.0,40.62 L131.0,40.72 L130.0,41.50 L129.0,41.79 L128.0,41.69 L127.0,41.90 L126.0,41.93 L125.0,41.21 L124.0,40.72 L123.0,41.19 L122.0,41.66 L121.0,41.60 L120.0,41.78 L119.0,42.14 L118.0,41.73 L117.0,40.87 L116.0,40.82 L115.0,41.26 L114.0,41.26 L113.0,41.28 L112.0,41.77 L111.0,41.80 L110.0,40.98 L109.0,40.46 L108.0,40.71 L107.0,40.78 L106.0,40.63 L105.0,41.05 L104.0,41.54 L103.0,41.07 L102.0,40.28 L101.0,40.20 L100.0,40.30 L99.0,40.45 L98.0,41.02 L97.0,42.15 L96.0,42.64 L95.0,42.34 L94.0,42.38 L93.0,42.85 L92.0,42.51 L91.0,42.25 L90.0,42.81 L89.0,43.33 L88.0,42.92 L87.0,42.35 L86.0,42.28 L85.0,42.00 L84.0,41.43 L83.0,41.59 L82.0,42.23 L81.0,42.20 L80.0,41.58 L79.0,41.32 L78.0,41.09 L77.0,40.31 L76.0,39.86 L75.0,40.34 L74.0,40.71 L73.0,40.32 L72.0,40.25 L71.0,40.44 L70.0,40.06 L69.0,39.45 L68.0,39.73 L67.0,40.50 L66.0,40.67 L65.0,40.59 L64.0,40.90 L63.0,40.85 L62.0,40.17 L61.0,39.95 L60.0,40.60 L59.0,41.07 L58.0,41.09 L57.0,41.45 L56.0,41.84 L55.0,41.38 L54.0,40.75 L53.0,41.00 L52.0,41.81 L51.0,42.16 L50.0,42.67 L49.0,43.58 L48.0,43.85 L47.0,43.38 L46.0,43.42 L45.0,43.39 L44.0,43.07 L43.0,42.66 L42.0,42.87 L41.0,42.92 L40.0,41.99 L39.0,40.98 L38.0,40.68 L37.0,40.90 L36.0,40.82 L35.0,41.29 L34.0,42.17 L33.0,42.26 L32.0,41.70 L31.0,41.63 L30.0,41.84 L29.0,41.42 L28.0,41.25 L27.0,41.88 L26.0,42.25 L25.0,41.69 L24.0,41.18 L23.0,41.11 L22.0,40.72 L21.0,40.18 L20.0,40.48 L19.0,41.15 L18.0,41.04 L17.0,40.53 L16.0,40.44 L15.0,40.23 L14.0,39.51 L13.0,39.32 L12.0,39.98 L11.0,40.32 L10.0,39.97 L9.0,39.83 L8.0,39.83 L7.0,39.35 L6.0,38.83 L5.0,39.29 L4.0,40.02 L3.0,40.10 L2.0,40.09 L1.0,40.42 L0.0,40.25Z" fill="#7b377b"/></svg><div class="abs" style="left:3px;top:4px;width:96px;height:16px;border-radius:5px;background:#ad4fab"></div><div class="t" style="left:7px;top:6px;font-size:12px;color:#f4f4f4;transform:scaleX(0.84);transform-origin:0 0">Ethereal Scratch 02</div></div><div class="abs" style="left:288px;top:382px;width:639px;height:75px;border-radius:4px;overflow:hidden;background:#c15abf"><svg class="abs" style="left:0;top:0" width="639" height="75" viewBox="0 0 639 75"><path d="M0.0,37.00 L1.0,37.00 L2.0,37.00 L3.0,37.00 L4.0,37.00 L5.0,37.00 L6.0,37.00 L7.0,37.00 L8.0,37.00 L9.0,37.00 L10.0,37.00 L11.0,37.00 L12.0,37.00 L13.0,37.00 L14.0,37.00 L15.0,37.00 L16.0,37.00 L17.0,37.00 L18.0,37.00 L19.0,37.00 L20.0,37.00 L21.0,37.00 L22.0,37.00 L23.0,37.00 L24.0,37.00 L25.0,37.00 L26.0,37.00 L27.0,37.00 L28.0,37.00 L29.0,37.00 L30.0,37.00 L31.0,37.00 L32.0,37.00 L33.0,37.00 L34.0,37.00 L35.0,36.24 L36.0,35.21 L37.0,34.88 L38.0,34.43 L39.0,33.62 L40.0,33.95 L41.0,34.24 L42.0,34.80 L43.0,36.00 L44.0,36.70 L45.0,36.70 L46.0,36.70 L47.0,36.70 L48.0,36.70 L49.0,36.26 L50.0,35.57 L51.0,35.56 L52.0,35.42 L53.0,34.91 L54.0,34.37 L55.0,33.80 L56.0,33.51 L57.0,33.59 L58.0,33.85 L59.0,33.98 L60.0,33.74 L61.0,33.20 L62.0,32.63 L63.0,32.46 L64.0,32.66 L65.0,33.04 L66.0,33.28 L67.0,33.15 L68.0,32.72 L69.0,32.27 L70.0,32.11 L71.0,32.32 L72.0,32.70 L73.0,32.61 L74.0,32.15 L75.0,31.39 L76.0,30.62 L77.0,30.14 L78.0,30.02 L79.0,30.08 L80.0,29.99 L81.0,30.32 L82.0,30.36 L83.0,30.40 L84.0,30.73 L85.0,31.43 L86.0,32.29 L87.0,32.99 L88.0,33.09 L89.0,32.90 L90.0,32.71 L91.0,32.81 L92.0,33.29 L93.0,33.77 L94.0,34.09 L95.0,34.03 L96.0,33.69 L97.0,33.35 L98.0,33.32 L99.0,33.65 L100.0,34.13 L101.0,34.44 L102.0,34.38 L103.0,33.98 L104.0,33.60 L105.0,33.52 L106.0,33.81 L107.0,34.24 L108.0,34.49 L109.0,34.37 L110.0,33.97 L111.0,33.59 L112.0,33.52 L113.0,33.94 L114.0,34.50 L115.0,34.87 L116.0,34.87 L117.0,34.59 L118.0,34.34 L119.0,34.40 L120.0,34.82 L121.0,36.00 L122.0,36.50 L123.0,36.50 L124.0,36.50 L125.0,35.19 L126.0,34.25 L127.0,33.66 L128.0,33.21 L129.0,33.44 L130.0,34.19 L131.0,34.67 L132.0,35.19 L133.0,36.50 L134.0,36.50 L135.0,36.50 L136.0,36.00 L137.0,34.85 L138.0,33.44 L139.0,32.07 L140.0,32.03 L141.0,33.34 L142.0,34.78 L143.0,36.00 L144.0,36.50 L145.0,36.50 L146.0,36.50 L147.0,36.00 L148.0,35.35 L149.0,35.28 L150.0,35.00 L151.0,35.34 L152.0,35.42 L153.0,36.00 L154.0,36.50 L155.0,36.50 L156.0,35.54 L157.0,34.50 L158.0,33.08 L159.0,31.41 L160.0,31.43 L161.0,31.79 L162.0,32.49 L163.0,33.30 L164.0,33.50 L165.0,33.32 L166.0,32.90 L167.0,32.56 L168.0,32.54 L169.0,32.88 L170.0,33.30 L171.0,33.50 L172.0,33.32 L173.0,32.54 L174.0,31.84 L175.0,31.48 L176.0,31.46 L177.0,31.52 L178.0,31.36 L179.0,30.81 L180.0,30.64 L181.0,30.55 L182.0,30.80 L183.0,31.39 L184.0,32.07 L185.0,32.50 L186.0,32.56 L187.0,32.38 L188.0,32.08 L189.0,32.12 L190.0,32.50 L191.0,32.96 L192.0,33.17 L193.0,33.00 L194.0,32.60 L195.0,32.31 L196.0,32.36 L197.0,32.74 L198.0,33.20 L199.0,33.40 L200.0,33.23 L201.0,32.83 L202.0,32.54 L203.0,32.61 L204.0,33.02 L205.0,33.49 L206.0,33.70 L207.0,33.53 L208.0,33.16 L209.0,32.89 L210.0,32.97 L211.0,33.38 L212.0,33.84 L213.0,33.95 L214.0,33.68 L215.0,33.20 L216.0,32.83 L217.0,32.82 L218.0,33.13 L219.0,33.50 L220.0,33.60 L221.0,33.32 L222.0,32.84 L223.0,32.58 L224.0,32.68 L225.0,33.09 L226.0,33.55 L227.0,33.75 L228.0,33.56 L229.0,33.18 L230.0,32.93 L231.0,33.03 L232.0,33.45 L233.0,34.28 L234.0,34.83 L235.0,35.01 L236.0,34.99 L237.0,35.11 L238.0,36.00 L239.0,36.23 L240.0,36.45 L241.0,36.67 L242.0,36.90 L243.0,36.90 L244.0,36.90 L245.0,36.90 L246.0,36.90 L247.0,36.90 L248.0,36.90 L249.0,36.90 L250.0,36.90 L251.0,36.90 L252.0,36.90 L253.0,36.90 L254.0,36.90 L255.0,36.90 L256.0,36.90 L257.0,36.90 L258.0,36.90 L259.0,36.90 L260.0,36.90 L261.0,36.90 L262.0,36.90 L263.0,36.90 L264.0,36.90 L265.0,36.90 L266.0,36.90 L267.0,36.90 L268.0,36.90 L269.0,36.90 L270.0,36.90 L271.0,36.90 L272.0,36.90 L273.0,36.90 L274.0,36.90 L275.0,35.31 L276.0,33.43 L277.0,31.17 L278.0,28.76 L279.0,26.51 L280.0,28.51 L281.0,30.81 L282.0,33.10 L283.0,35.08 L284.0,36.50 L285.0,36.57 L286.0,36.63 L287.0,36.70 L288.0,36.66 L289.0,36.62 L290.0,36.58 L291.0,36.54 L292.0,36.50 L293.0,34.22 L294.0,32.55 L295.0,31.17 L296.0,29.77 L297.0,28.05 L298.0,25.97 L299.0,23.75 L300.0,25.15 L301.0,26.92 L302.0,28.96 L303.0,30.98 L304.0,32.69 L305.0,34.04 L306.0,35.25 L307.0,35.13 L308.0,35.39 L309.0,35.92 L310.0,36.00 L311.0,36.07 L312.0,36.14 L313.0,36.21 L314.0,36.29 L315.0,36.36 L316.0,36.43 L317.0,36.50 L318.0,36.58 L319.0,36.66 L320.0,36.74 L321.0,36.82 L322.0,36.90 L323.0,36.90 L324.0,36.90 L325.0,36.91 L326.0,36.91 L327.0,36.91 L328.0,36.91 L329.0,36.91 L330.0,36.91 L331.0,36.92 L332.0,36.92 L333.0,36.92 L334.0,36.92 L335.0,36.92 L336.0,36.92 L337.0,36.93 L338.0,36.93 L339.0,36.93 L340.0,36.93 L341.0,36.93 L342.0,36.93 L343.0,36.94 L344.0,36.94 L345.0,36.94 L346.0,36.94 L347.0,36.94 L348.0,36.94 L349.0,36.95 L350.0,36.95 L351.0,36.95 L352.0,36.95 L353.0,36.95 L354.0,36.96 L355.0,36.96 L356.0,36.96 L357.0,36.96 L358.0,36.96 L359.0,36.96 L360.0,36.97 L361.0,36.97 L362.0,36.97 L363.0,36.97 L364.0,36.97 L365.0,36.97 L366.0,36.98 L367.0,36.98 L368.0,36.98 L369.0,36.98 L370.0,36.98 L371.0,36.98 L372.0,36.99 L373.0,36.99 L374.0,36.99 L375.0,36.99 L376.0,36.99 L377.0,36.99 L378.0,37.00 L379.0,37.00 L380.0,37.00 L381.0,36.17 L382.0,35.43 L383.0,34.17 L384.0,34.83 L385.0,36.17 L386.0,37.00 L387.0,37.00 L388.0,37.00 L389.0,37.00 L390.0,37.00 L391.0,37.00 L392.0,37.00 L393.0,37.00 L394.0,37.00 L395.0,37.00 L396.0,37.00 L397.0,37.00 L398.0,37.00 L399.0,37.00 L400.0,37.00 L401.0,37.00 L402.0,37.00 L403.0,37.00 L404.0,37.00 L405.0,37.00 L406.0,37.00 L407.0,37.00 L408.0,37.00 L409.0,37.00 L410.0,37.00 L411.0,37.00 L412.0,37.00 L413.0,37.00 L414.0,37.00 L415.0,37.00 L416.0,37.00 L417.0,37.00 L418.0,37.00 L419.0,37.00 L420.0,37.00 L421.0,37.00 L422.0,37.00 L423.0,37.00 L424.0,37.00 L425.0,37.00 L426.0,37.00 L427.0,37.00 L428.0,37.00 L429.0,37.00 L430.0,37.00 L431.0,37.00 L432.0,37.00 L433.0,37.00 L434.0,37.00 L435.0,37.00 L436.0,37.00 L437.0,37.00 L438.0,37.00 L439.0,37.00 L440.0,37.00 L441.0,37.00 L442.0,37.00 L443.0,37.00 L444.0,37.00 L445.0,37.00 L446.0,37.00 L447.0,37.00 L448.0,37.00 L449.0,37.00 L450.0,37.00 L451.0,37.00 L452.0,37.00 L453.0,37.00 L454.0,37.00 L455.0,37.00 L456.0,37.00 L457.0,37.00 L458.0,37.00 L459.0,37.00 L460.0,37.00 L461.0,37.00 L462.0,37.00 L463.0,37.00 L464.0,37.00 L465.0,37.00 L466.0,37.00 L467.0,37.00 L468.0,37.00 L469.0,37.00 L470.0,37.00 L471.0,37.00 L472.0,37.00 L473.0,37.00 L474.0,37.00 L475.0,37.00 L476.0,37.00 L477.0,37.00 L478.0,37.00 L479.0,37.00 L480.0,37.00 L481.0,37.00 L482.0,37.00 L483.0,37.00 L484.0,37.00 L485.0,37.00 L486.0,37.00 L487.0,37.00 L488.0,37.00 L489.0,37.00 L490.0,37.00 L491.0,37.00 L492.0,37.00 L493.0,37.00 L494.0,37.00 L495.0,37.00 L496.0,37.00 L497.0,37.00 L498.0,37.00 L499.0,37.00 L500.0,37.00 L501.0,37.00 L502.0,37.00 L503.0,37.00 L504.0,37.00 L505.0,37.00 L506.0,37.00 L507.0,37.00 L508.0,37.00 L509.0,37.00 L510.0,37.00 L511.0,37.00 L512.0,37.00 L513.0,37.00 L514.0,37.00 L515.0,37.00 L516.0,37.00 L517.0,37.00 L518.0,37.00 L519.0,37.00 L520.0,37.00 L521.0,37.00 L522.0,37.00 L523.0,37.00 L524.0,37.00 L525.0,37.00 L526.0,37.00 L527.0,37.00 L528.0,37.00 L529.0,37.00 L530.0,37.00 L531.0,37.00 L532.0,37.00 L533.0,37.00 L534.0,37.00 L535.0,37.00 L536.0,37.00 L537.0,37.00 L538.0,37.00 L539.0,37.00 L540.0,37.00 L541.0,37.00 L542.0,37.00 L543.0,37.00 L544.0,37.00 L545.0,37.00 L546.0,37.00 L547.0,37.00 L548.0,37.00 L549.0,37.00 L550.0,37.00 L551.0,37.00 L552.0,37.00 L553.0,37.00 L554.0,37.00 L555.0,37.00 L556.0,37.00 L557.0,37.00 L558.0,37.00 L559.0,37.00 L560.0,37.00 L561.0,37.00 L562.0,37.00 L563.0,37.00 L564.0,37.00 L565.0,37.00 L566.0,37.00 L567.0,37.00 L568.0,37.00 L569.0,37.00 L570.0,37.00 L571.0,37.00 L572.0,37.00 L573.0,37.00 L574.0,37.00 L575.0,37.00 L576.0,37.00 L577.0,37.00 L578.0,37.00 L579.0,37.00 L580.0,37.00 L581.0,37.00 L582.0,37.00 L583.0,37.00 L584.0,37.00 L585.0,37.00 L586.0,37.00 L587.0,37.00 L588.0,37.00 L589.0,37.00 L590.0,37.00 L591.0,37.00 L592.0,37.00 L593.0,37.00 L594.0,37.00 L595.0,37.00 L596.0,37.00 L597.0,37.00 L598.0,37.00 L599.0,37.00 L600.0,37.00 L601.0,37.00 L602.0,37.00 L603.0,37.00 L604.0,37.00 L605.0,37.00 L606.0,37.00 L607.0,37.00 L608.0,37.00 L609.0,37.00 L610.0,37.00 L611.0,37.00 L612.0,37.00 L613.0,37.00 L614.0,37.00 L615.0,37.00 L616.0,37.00 L617.0,37.00 L618.0,37.00 L619.0,37.00 L620.0,37.00 L621.0,37.00 L622.0,37.00 L623.0,37.00 L624.0,37.00 L625.0,37.00 L626.0,37.00 L627.0,37.00 L628.0,37.00 L629.0,37.00 L630.0,37.00 L631.0,37.00 L632.0,37.00 L633.0,37.00 L634.0,37.00 L635.0,37.00 L636.0,37.00 L637.0,37.00 L638.0,37.00 L639.0,37.00 L639.0,38.00 L638.0,38.00 L637.0,38.00 L636.0,38.00 L635.0,38.00 L634.0,38.00 L633.0,38.00 L632.0,38.00 L631.0,38.00 L630.0,38.00 L629.0,38.00 L628.0,38.00 L627.0,38.00 L626.0,38.00 L625.0,38.00 L624.0,38.00 L623.0,38.00 L622.0,38.00 L621.0,38.00 L620.0,38.00 L619.0,38.00 L618.0,38.00 L617.0,38.00 L616.0,38.00 L615.0,38.00 L614.0,38.00 L613.0,38.00 L612.0,38.00 L611.0,38.00 L610.0,38.00 L609.0,38.00 L608.0,38.00 L607.0,38.00 L606.0,38.00 L605.0,38.00 L604.0,38.00 L603.0,38.00 L602.0,38.00 L601.0,38.00 L600.0,38.00 L599.0,38.00 L598.0,38.00 L597.0,38.00 L596.0,38.00 L595.0,38.00 L594.0,38.00 L593.0,38.00 L592.0,38.00 L591.0,38.00 L590.0,38.00 L589.0,38.00 L588.0,38.00 L587.0,38.00 L586.0,38.00 L585.0,38.00 L584.0,38.00 L583.0,38.00 L582.0,38.00 L581.0,38.00 L580.0,38.00 L579.0,38.00 L578.0,38.00 L577.0,38.00 L576.0,38.00 L575.0,38.00 L574.0,38.00 L573.0,38.00 L572.0,38.00 L571.0,38.00 L570.0,38.00 L569.0,38.00 L568.0,38.00 L567.0,38.00 L566.0,38.00 L565.0,38.00 L564.0,38.00 L563.0,38.00 L562.0,38.00 L561.0,38.00 L560.0,38.00 L559.0,38.00 L558.0,38.00 L557.0,38.00 L556.0,38.00 L555.0,38.00 L554.0,38.00 L553.0,38.00 L552.0,38.00 L551.0,38.00 L550.0,38.00 L549.0,38.00 L548.0,38.00 L547.0,38.00 L546.0,38.00 L545.0,38.00 L544.0,38.00 L543.0,38.00 L542.0,38.00 L541.0,38.00 L540.0,38.00 L539.0,38.00 L538.0,38.00 L537.0,38.00 L536.0,38.00 L535.0,38.00 L534.0,38.00 L533.0,38.00 L532.0,38.00 L531.0,38.00 L530.0,38.00 L529.0,38.00 L528.0,38.00 L527.0,38.00 L526.0,38.00 L525.0,38.00 L524.0,38.00 L523.0,38.00 L522.0,38.00 L521.0,38.00 L520.0,38.00 L519.0,38.00 L518.0,38.00 L517.0,38.00 L516.0,38.00 L515.0,38.00 L514.0,38.00 L513.0,38.00 L512.0,38.00 L511.0,38.00 L510.0,38.00 L509.0,38.00 L508.0,38.00 L507.0,38.00 L506.0,38.00 L505.0,38.00 L504.0,38.00 L503.0,38.00 L502.0,38.00 L501.0,38.00 L500.0,38.00 L499.0,38.00 L498.0,38.00 L497.0,38.00 L496.0,38.00 L495.0,38.00 L494.0,38.00 L493.0,38.00 L492.0,38.00 L491.0,38.00 L490.0,38.00 L489.0,38.00 L488.0,38.00 L487.0,38.00 L486.0,38.00 L485.0,38.00 L484.0,38.00 L483.0,38.00 L482.0,38.00 L481.0,38.00 L480.0,38.00 L479.0,38.00 L478.0,38.00 L477.0,38.00 L476.0,38.00 L475.0,38.00 L474.0,38.00 L473.0,38.00 L472.0,38.00 L471.0,38.00 L470.0,38.00 L469.0,38.00 L468.0,38.00 L467.0,38.00 L466.0,38.00 L465.0,38.00 L464.0,38.00 L463.0,38.00 L462.0,38.00 L461.0,38.00 L460.0,38.00 L459.0,38.00 L458.0,38.00 L457.0,38.00 L456.0,38.00 L455.0,38.00 L454.0,38.00 L453.0,38.00 L452.0,38.00 L451.0,38.00 L450.0,38.00 L449.0,38.00 L448.0,38.00 L447.0,38.00 L446.0,38.00 L445.0,38.00 L444.0,38.00 L443.0,38.00 L442.0,38.00 L441.0,38.00 L440.0,38.00 L439.0,38.00 L438.0,38.00 L437.0,38.00 L436.0,38.00 L435.0,38.00 L434.0,38.00 L433.0,38.00 L432.0,38.00 L431.0,38.00 L430.0,38.00 L429.0,38.00 L428.0,38.00 L427.0,38.00 L426.0,38.00 L425.0,38.00 L424.0,38.00 L423.0,38.00 L422.0,38.00 L421.0,38.00 L420.0,38.00 L419.0,38.00 L418.0,38.00 L417.0,38.00 L416.0,38.00 L415.0,38.00 L414.0,38.00 L413.0,38.00 L412.0,38.00 L411.0,38.00 L410.0,38.00 L409.0,38.00 L408.0,38.00 L407.0,38.00 L406.0,38.00 L405.0,38.00 L404.0,38.00 L403.0,38.00 L402.0,38.00 L401.0,38.00 L400.0,38.00 L399.0,38.00 L398.0,38.00 L397.0,38.00 L396.0,38.00 L395.0,38.00 L394.0,38.00 L393.0,38.00 L392.0,38.00 L391.0,38.00 L390.0,38.00 L389.0,38.00 L388.0,38.00 L387.0,38.00 L386.0,38.00 L385.0,38.83 L384.0,40.17 L383.0,40.83 L382.0,39.57 L381.0,38.83 L380.0,38.00 L379.0,38.00 L378.0,38.00 L377.0,38.01 L376.0,38.01 L375.0,38.01 L374.0,38.01 L373.0,38.01 L372.0,38.01 L371.0,38.02 L370.0,38.02 L369.0,38.02 L368.0,38.02 L367.0,38.02 L366.0,38.02 L365.0,38.03 L364.0,38.03 L363.0,38.03 L362.0,38.03 L361.0,38.03 L360.0,38.03 L359.0,38.04 L358.0,38.04 L357.0,38.04 L356.0,38.04 L355.0,38.04 L354.0,38.04 L353.0,38.05 L352.0,38.05 L351.0,38.05 L350.0,38.05 L349.0,38.05 L348.0,38.06 L347.0,38.06 L346.0,38.06 L345.0,38.06 L344.0,38.06 L343.0,38.06 L342.0,38.07 L341.0,38.07 L340.0,38.07 L339.0,38.07 L338.0,38.07 L337.0,38.07 L336.0,38.08 L335.0,38.08 L334.0,38.08 L333.0,38.08 L332.0,38.08 L331.0,38.08 L330.0,38.09 L329.0,38.09 L328.0,38.09 L327.0,38.09 L326.0,38.09 L325.0,38.09 L324.0,38.10 L323.0,38.10 L322.0,38.10 L321.0,38.18 L320.0,38.26 L319.0,38.34 L318.0,38.42 L317.0,38.50 L316.0,38.57 L315.0,38.64 L314.0,38.71 L313.0,38.79 L312.0,38.86 L311.0,38.93 L310.0,39.00 L309.0,39.08 L308.0,39.61 L307.0,39.87 L306.0,39.75 L305.0,40.96 L304.0,42.31 L303.0,44.02 L302.0,46.04 L301.0,48.08 L300.0,49.85 L299.0,51.25 L298.0,49.03 L297.0,46.95 L296.0,45.23 L295.0,43.83 L294.0,42.45 L293.0,40.78 L292.0,38.50 L291.0,38.46 L290.0,38.42 L289.0,38.38 L288.0,38.34 L287.0,38.30 L286.0,38.37 L285.0,38.43 L284.0,38.50 L283.0,39.92 L282.0,41.90 L281.0,44.19 L280.0,46.49 L279.0,48.49 L278.0,46.24 L277.0,43.83 L276.0,41.57 L275.0,39.69 L274.0,38.10 L273.0,38.10 L272.0,38.10 L271.0,38.10 L270.0,38.10 L269.0,38.10 L268.0,38.10 L267.0,38.10 L266.0,38.10 L265.0,38.10 L264.0,38.10 L263.0,38.10 L262.0,38.10 L261.0,38.10 L260.0,38.10 L259.0,38.10 L258.0,38.10 L257.0,38.10 L256.0,38.10 L255.0,38.10 L254.0,38.10 L253.0,38.10 L252.0,38.10 L251.0,38.10 L250.0,38.10 L249.0,38.10 L248.0,38.10 L247.0,38.10 L246.0,38.10 L245.0,38.10 L244.0,38.10 L243.0,38.10 L242.0,38.10 L241.0,38.33 L240.0,38.55 L239.0,38.77 L238.0,39.00 L237.0,39.89 L236.0,40.01 L235.0,39.99 L234.0,40.17 L233.0,40.72 L232.0,41.55 L231.0,41.97 L230.0,42.07 L229.0,41.82 L228.0,41.44 L227.0,41.25 L226.0,41.45 L225.0,41.91 L224.0,42.32 L223.0,42.42 L222.0,42.16 L221.0,41.68 L220.0,41.40 L219.0,41.50 L218.0,41.87 L217.0,42.18 L216.0,42.17 L215.0,41.80 L214.0,41.32 L213.0,41.05 L212.0,41.16 L211.0,41.62 L210.0,42.03 L209.0,42.11 L208.0,41.84 L207.0,41.47 L206.0,41.30 L205.0,41.51 L204.0,41.98 L203.0,42.39 L202.0,42.46 L201.0,42.17 L200.0,41.77 L199.0,41.60 L198.0,41.80 L197.0,42.26 L196.0,42.64 L195.0,42.69 L194.0,42.40 L193.0,42.00 L192.0,41.83 L191.0,42.04 L190.0,42.50 L189.0,42.88 L188.0,42.92 L187.0,42.62 L186.0,42.44 L185.0,42.50 L184.0,42.93 L183.0,43.61 L182.0,44.20 L181.0,44.45 L180.0,44.36 L179.0,44.19 L178.0,43.64 L177.0,43.48 L176.0,43.54 L175.0,43.52 L174.0,43.16 L173.0,42.46 L172.0,41.68 L171.0,41.50 L170.0,41.70 L169.0,42.12 L168.0,42.46 L167.0,42.44 L166.0,42.10 L165.0,41.68 L164.0,41.50 L163.0,41.70 L162.0,42.51 L161.0,43.21 L160.0,43.57 L159.0,43.59 L158.0,41.92 L157.0,40.50 L156.0,39.46 L155.0,38.50 L154.0,38.50 L153.0,39.00 L152.0,39.58 L151.0,39.66 L150.0,40.00 L149.0,39.72 L148.0,39.65 L147.0,39.00 L146.0,38.50 L145.0,38.50 L144.0,38.50 L143.0,39.00 L142.0,40.22 L141.0,41.66 L140.0,42.97 L139.0,42.93 L138.0,41.56 L137.0,40.15 L136.0,39.00 L135.0,38.50 L134.0,38.50 L133.0,38.50 L132.0,39.81 L131.0,40.33 L130.0,40.81 L129.0,41.56 L128.0,41.79 L127.0,41.34 L126.0,40.75 L125.0,39.81 L124.0,38.50 L123.0,38.50 L122.0,38.50 L121.0,39.00 L120.0,40.18 L119.0,40.60 L118.0,40.66 L117.0,40.41 L116.0,40.13 L115.0,40.13 L114.0,40.50 L113.0,41.06 L112.0,41.48 L111.0,41.41 L110.0,41.03 L109.0,40.63 L108.0,40.51 L107.0,40.76 L106.0,41.19 L105.0,41.48 L104.0,41.40 L103.0,41.02 L102.0,40.62 L101.0,40.56 L100.0,40.87 L99.0,41.35 L98.0,41.68 L97.0,41.65 L96.0,41.31 L95.0,40.97 L94.0,40.91 L93.0,41.23 L92.0,41.71 L91.0,42.19 L90.0,42.29 L89.0,42.10 L88.0,41.91 L87.0,42.01 L86.0,42.71 L85.0,43.57 L84.0,44.27 L83.0,44.60 L82.0,44.64 L81.0,44.68 L80.0,45.01 L79.0,44.92 L78.0,44.98 L77.0,44.86 L76.0,44.38 L75.0,43.61 L74.0,42.85 L73.0,42.39 L72.0,42.30 L71.0,42.68 L70.0,42.89 L69.0,42.73 L68.0,42.28 L67.0,41.85 L66.0,41.72 L65.0,41.96 L64.0,42.34 L63.0,42.54 L62.0,42.37 L61.0,41.80 L60.0,41.26 L59.0,41.02 L58.0,41.15 L57.0,41.41 L56.0,41.49 L55.0,41.20 L54.0,40.63 L53.0,40.09 L52.0,39.58 L51.0,39.44 L50.0,39.43 L49.0,38.74 L48.0,38.30 L47.0,38.30 L46.0,38.30 L45.0,38.30 L44.0,38.30 L43.0,39.00 L42.0,40.20 L41.0,40.76 L40.0,41.05 L39.0,41.38 L38.0,40.57 L37.0,40.12 L36.0,39.79 L35.0,38.76 L34.0,38.00 L33.0,38.00 L32.0,38.00 L31.0,38.00 L30.0,38.00 L29.0,38.00 L28.0,38.00 L27.0,38.00 L26.0,38.00 L25.0,38.00 L24.0,38.00 L23.0,38.00 L22.0,38.00 L21.0,38.00 L20.0,38.00 L19.0,38.00 L18.0,38.00 L17.0,38.00 L16.0,38.00 L15.0,38.00 L14.0,38.00 L13.0,38.00 L12.0,38.00 L11.0,38.00 L10.0,38.00 L9.0,38.00 L8.0,38.00 L7.0,38.00 L6.0,38.00 L5.0,38.00 L4.0,38.00 L3.0,38.00 L2.0,38.00 L1.0,38.00 L0.0,38.00Z" fill="#7b377b"/></svg><div class="abs" style="left:3px;top:4px;width:54px;height:16px;border-radius:5px;background:#ad4fab"></div><div class="t" style="left:7px;top:6px;font-size:12px;color:#f4f4f4;transform:scaleX(0.84);transform-origin:0 0">Voice/Mic</div></div><div class="abs" style="left:299px;top:466px;width:1060px;height:75px;border:2px dashed #3d4046;border-radius:9px"></div><div class="t" style="left:998px;top:482px;font-size:17px;color:#d5dade">+</div><svg class="abs" style="left:1008px;top:480px" width="20" height="22" viewBox="0 0 20 22"><path d="M7 4.5L18.8 1.3V5L7 8.2Z" fill="#d5dade"/><rect x="7" y="4.5" width="1.9" height="13.5" fill="#d5dade"/><rect x="16.9" y="1.5" width="1.9" height="14.5" fill="#d5dade"/><ellipse cx="5.2" cy="18.2" rx="3.7" ry="2.9" transform="rotate(-20 5.2 18.2)" fill="#d5dade"/><ellipse cx="15.1" cy="16.3" rx="3.7" ry="2.9" transform="rotate(-20 15.1 16.3)" fill="#d5dade"/></svg><div class="t" style="left:906px;top:504px;font-size:15px;color:#d3d7db">Drop a loop or an audio/MIDI file</div><div class="abs" style="left:275px;top:546px;width:178px;height:9px;border-radius:5px;background:#65696d"></div><div class="abs" style="left:287px;top:136px;width:1px;height:420px;background:#f4f4f4"></div><svg class="abs" style="left:276px;top:121px" width="22" height="19" viewBox="0 0 22 19"><path d="M3 1.5H19a2 2 0 0 1 1.6 3L12.4 17.6a1.6 1.6 0 0 1-2.8 0L1.4 4.5A2 2 0 0 1 3 1.5z" fill="#f4f4f4"/></svg><div class="abs" style="left:0;top:556px;width:1339px;height:1px;background:#3a3d44"></div><div class="abs" style="left:0;top:557px;width:1339px;height:40px;background:#2c2f36"></div><div class="abs" style="left:0;top:597px;width:1339px;height:1px;background:#3a3d44"></div><svg class="abs" style="left:11px;top:570px" width="14" height="14" viewBox="0 0 14 14"><path d="M1.5 1.5l11 11M12.5 1.5l-11 11" stroke="#f4f4f4" stroke-width="2.4" stroke-linecap="round"/></svg><svg class="abs" style="left:35px;top:570px" width="14" height="14" viewBox="0 0 14 14"><path d="M1 5V1h4M9 1h4v4M13 9v4H9M5 13H1V9" fill="none" stroke="#f4f4f4" stroke-width="1.8"/></svg><div class="t" style="left:62px;top:570px;font-size:13.5px;color:#e8e8e8;transform:scaleX(0.96);transform-origin:0 0">Drum Machine</div><div class="abs" style="left:0;top:598px;width:275px;height:293px;background:#2c2f36"></div><div class="abs" style="left:275px;top:598px;width:1064px;height:293px;background:#1c1d20"></div><div class="abs" style="left:274px;top:598px;width:1px;height:293px;background:#383b42"></div><div class="t" style="left:7px;top:614px;font-size:14px;color:#e8e8e8">Instrument</div><div class="abs" style="left:6px;top:638px;width:256px;height:30px;border-radius:4px;background:#282b31;border:1px solid #363940"></div><div class="t" style="left:19px;top:645px;font-size:13.5px;color:#8b8d91;transform:scaleX(0.96);transform-origin:0 0">Drum Machine</div><div class="t" style="left:244px;top:648px;font-size:10px;color:#8b8d91">&#9660;</div><div class="abs" style="left:6px;top:676px;width:256px;height:30px;border-radius:4px;background:#1f2125;border:1px solid #363940"></div><div class="t" style="left:19px;top:683px;font-size:13.5px;color:#f0f0f0;transform:scaleX(0.96);transform-origin:0 0">808 Kit</div><div class="t" style="left:244px;top:686px;font-size:10px;color:#f0f0f0">&#9660;</div><div class="abs" style="left:619px;top:613px;width:635px;height:267px;border-radius:4px;background:#2b2e32;overflow:hidden"><div class="abs" style="left:0;top:0;width:635px;height:28px;background:#2c2f33"></div><div class="abs" style="left:0;top:28px;width:635px;height:1.5px;background:#1e2023"></div></div><svg class="abs" style="left:629px;top:620px" width="15" height="14" viewBox="0 0 15 14"><rect x="4" y="0.5" width="10.5" height="9.5" rx="1.2" fill="#e8e9e8"/><path d="M2.5 3v9.5h10" fill="none" stroke="#e8e9e8" stroke-width="1.3"/></svg><div class="t" style="left:656px;top:620px;font-size:13.5px;color:#e8e8e8;transform:scaleX(0.9);transform-origin:0 0">808 Kit</div><div class="abs" style="left:627px;top:650px;width:80px;height:26px;border-radius:4px 0 0 4px;background:#1b1c1f"></div><svg class="abs" style="left:638px;top:653px" width="25" height="22" viewBox="0 0 25 22"><ellipse cx="12.5" cy="10" rx="11.7" ry="3.4" fill="#16a6c4"/><path d="M11.5 10L12.5 6L13.5 10V14L12.5 16.2L11.5 14Z" fill="#16a6c4"/></svg><div class="t" style="left:673px;top:656px;font-size:13px;color:#e8e8e8">6</div><div class="t" style="left:690px;top:658px;font-size:10px;color:#e8e8e8">&#9660;</div><div class="abs" style="left:709px;top:650px;width:26px;height:26px;background:#474b50"></div><div class="abs" style="left:737px;top:650px;width:26px;height:26px;background:#474b50"></div><div class="abs" style="left:765px;top:650px;width:26px;height:26px;background:#474b50"></div><div class="abs" style="left:793px;top:650px;width:26px;height:26px;background:#474b50"></div><div class="abs" style="left:821px;top:650px;width:26px;height:26px;background:#393c40"></div><div class="abs" style="left:849px;top:650px;width:26px;height:26px;background:#393c40"></div><div class="abs" style="left:877px;top:650px;width:26px;height:26px;background:#393c40"></div><div class="abs" style="left:905px;top:650px;width:26px;height:26px;background:#393c40"></div><div class="abs" style="left:933px;top:650px;width:26px;height:26px;background:#474b50"></div><div class="abs" style="left:961px;top:650px;width:26px;height:26px;background:#474b50"></div><div class="abs" style="left:989px;top:650px;width:26px;height:26px;background:#474b50"></div><div class="abs" style="left:1017px;top:650px;width:26px;height:26px;background:#474b50"></div><div class="abs" style="left:1045px;top:650px;width:26px;height:26px;background:#393c40"></div><div class="abs" style="left:1073px;top:650px;width:26px;height:26px;background:#393c40"></div><div class="abs" style="left:1101px;top:650px;width:26px;height:26px;background:#393c40"></div><div class="abs" style="left:1129px;top:650px;width:26px;height:26px;background:#393c40"></div><div class="abs" style="left:627px;top:678px;width:80px;height:26px;border-radius:4px 0 0 4px;background:#1b1c1f"></div><svg class="abs" style="left:638px;top:681px" width="25" height="22" viewBox="0 0 25 22"><ellipse cx="12.5" cy="7.2" rx="11.5" ry="3" fill="#e7a80a"/><ellipse cx="12.5" cy="12.9" rx="11" ry="3" fill="none" stroke="#e7a80a" stroke-width="1.1"/><path d="M11.7 7L12.5 1L13.3 7V15L12.5 19L11.7 15Z" fill="#e7a80a"/></svg><div class="t" style="left:673px;top:684px;font-size:13px;color:#e8e8e8">9</div><div class="t" style="left:690px;top:686px;font-size:10px;color:#e8e8e8">&#9660;</div><div class="abs" style="left:709px;top:678px;width:26px;height:26px;background:#474b50"></div><div class="abs" style="left:737px;top:678px;width:26px;height:26px;background:#474b50"></div><div class="abs" style="left:765px;top:678px;width:26px;height:26px;background:#474b50"></div><div class="abs" style="left:793px;top:678px;width:26px;height:26px;background:#474b50"></div><div class="abs" style="left:821px;top:678px;width:26px;height:26px;background:#393c40"></div><div class="abs" style="left:849px;top:678px;width:26px;height:26px;background:#393c40"></div><div class="abs" style="left:877px;top:678px;width:26px;height:26px;background:#393c40"></div><div class="abs" style="left:905px;top:678px;width:26px;height:26px;background:#393c40"></div><div class="abs" style="left:933px;top:678px;width:26px;height:26px;background:#474b50"></div><div class="abs" style="left:961px;top:678px;width:26px;height:26px;background:#474b50"></div><div class="abs" style="left:989px;top:678px;width:26px;height:26px;background:#474b50"></div><div class="abs" style="left:1017px;top:678px;width:26px;height:26px;background:#474b50"></div><div class="abs" style="left:1045px;top:678px;width:26px;height:26px;background:#393c40"></div><div class="abs" style="left:1073px;top:678px;width:26px;height:26px;background:#393c40"></div><div class="abs" style="left:1101px;top:678px;width:26px;height:26px;background:#393c40"></div><div class="abs" style="left:1129px;top:678px;width:26px;height:26px;background:#393c40"></div><div class="abs" style="left:739px;top:680px;width:22px;height:22px;border-radius:50%;background:#e7a80a"></div><div class="abs" style="left:627px;top:706px;width:80px;height:26px;border-radius:4px 0 0 4px;background:#1b1c1f"></div><svg class="abs" style="left:638px;top:709px" width="25" height="22" viewBox="0 0 25 22"><ellipse cx="12.5" cy="10.8" rx="11.7" ry="3.6" fill="#dc3524"/><path d="M11.5 10.8L12.5 3.6L13.5 10.8L12.5 17.6Z" fill="#dc3524"/></svg><div class="t" style="left:673px;top:712px;font-size:13px;color:#e8e8e8">O</div><div class="t" style="left:690px;top:714px;font-size:10px;color:#e8e8e8">&#9660;</div><div class="abs" style="left:709px;top:706px;width:26px;height:26px;background:#474b50"></div><div class="abs" style="left:737px;top:706px;width:26px;height:26px;background:#474b50"></div><div class="abs" style="left:765px;top:706px;width:26px;height:26px;background:#474b50"></div><div class="abs" style="left:793px;top:706px;width:26px;height:26px;background:#474b50"></div><div class="abs" style="left:821px;top:706px;width:26px;height:26px;background:#393c40"></div><div class="abs" style="left:849px;top:706px;width:26px;height:26px;background:#393c40"></div><div class="abs" style="left:877px;top:706px;width:26px;height:26px;background:#393c40"></div><div class="abs" style="left:905px;top:706px;width:26px;height:26px;background:#393c40"></div><div class="abs" style="left:933px;top:706px;width:26px;height:26px;background:#474b50"></div><div class="abs" style="left:961px;top:706px;width:26px;height:26px;background:#474b50"></div><div class="abs" style="left:989px;top:706px;width:26px;height:26px;background:#474b50"></div><div class="abs" style="left:1017px;top:706px;width:26px;height:26px;background:#474b50"></div><div class="abs" style="left:1045px;top:706px;width:26px;height:26px;background:#393c40"></div><div class="abs" style="left:1073px;top:706px;width:26px;height:26px;background:#393c40"></div><div class="abs" style="left:1101px;top:706px;width:26px;height:26px;background:#393c40"></div><div class="abs" style="left:1129px;top:706px;width:26px;height:26px;background:#393c40"></div><div class="abs" style="left:711px;top:708px;width:22px;height:22px;border-radius:50%;background:#dc3524"></div><div class="abs" style="left:767px;top:708px;width:22px;height:22px;border-radius:50%;background:#dc3524"></div><div class="abs" style="left:823px;top:708px;width:22px;height:22px;border-radius:50%;background:#dc3524"></div><div class="abs" style="left:879px;top:708px;width:22px;height:22px;border-radius:50%;background:#dc3524"></div><div class="abs" style="left:935px;top:708px;width:22px;height:22px;border-radius:50%;background:#dc3524"></div><div class="abs" style="left:991px;top:708px;width:22px;height:22px;border-radius:50%;background:#dc3524"></div><div class="abs" style="left:1047px;top:708px;width:22px;height:22px;border-radius:50%;background:#dc3524"></div><div class="abs" style="left:1103px;top:708px;width:22px;height:22px;border-radius:50%;background:#dc3524"></div><div class="abs" style="left:627px;top:734px;width:80px;height:26px;border-radius:4px 0 0 4px;background:#1b1c1f"></div><svg class="abs" style="left:636px;top:734px" width="28" height="26" viewBox="0 0 28 26"><path d="M5.5 18.5L6.3 9.5Q6.8 6.5 8.3 7.2L9.2 10.3L10.6 9.3L12.8 13V21Q11.3 22.8 9.5 22.2Z" fill="#0f93e0"/><path d="M10.8 16.8L12.3 9.4Q12.8 7.6 13.9 8.1L15 5.6Q16 3.6 17.5 4.5L18.6 5.2Q20.2 5 20.4 6.6L21.2 9.2L23.6 14.5L24 20Q23.5 22.6 21 23.1H18Q15.8 22.6 14 20.6Z" fill="#0f93e0" stroke="#1b1c1f" stroke-width="0.9"/><path d="M13.3 10.5L16.3 16.5M15.6 7.2L18.7 14.2M18.3 6.3L20.8 12.2" stroke="#1b1c1f" stroke-width="0.8"/></svg><div class="t" style="left:673px;top:740px;font-size:13px;color:#e8e8e8">C</div><div class="t" style="left:690px;top:742px;font-size:10px;color:#e8e8e8">&#9660;</div><div class="abs" style="left:709px;top:734px;width:26px;height:26px;background:#474b50"></div><div class="abs" style="left:737px;top:734px;width:26px;height:26px;background:#474b50"></div><div class="abs" style="left:765px;top:734px;width:26px;height:26px;background:#474b50"></div><div class="abs" style="left:793px;top:734px;width:26px;height:26px;background:#474b50"></div><div class="abs" style="left:821px;top:734px;width:26px;height:26px;background:#393c40"></div><div class="abs" style="left:849px;top:734px;width:26px;height:26px;background:#393c40"></div><div class="abs" style="left:877px;top:734px;width:26px;height:26px;background:#393c40"></div><div class="abs" style="left:905px;top:734px;width:26px;height:26px;background:#393c40"></div><div class="abs" style="left:933px;top:734px;width:26px;height:26px;background:#474b50"></div><div class="abs" style="left:961px;top:734px;width:26px;height:26px;background:#474b50"></div><div class="abs" style="left:989px;top:734px;width:26px;height:26px;background:#474b50"></div><div class="abs" style="left:1017px;top:734px;width:26px;height:26px;background:#474b50"></div><div class="abs" style="left:1045px;top:734px;width:26px;height:26px;background:#393c40"></div><div class="abs" style="left:1073px;top:734px;width:26px;height:26px;background:#393c40"></div><div class="abs" style="left:1101px;top:734px;width:26px;height:26px;background:#393c40"></div><div class="abs" style="left:1129px;top:734px;width:26px;height:26px;background:#393c40"></div><div class="abs" style="left:627px;top:762px;width:80px;height:26px;border-radius:4px 0 0 4px;background:#1b1c1f"></div><svg class="abs" style="left:638px;top:765px" width="25" height="22" viewBox="0 0 25 22"><path d="M2 9h21v7c0 1.5-4.7 2.5-10.5 2.5S2 17.5 2 16z" fill="#3e9e3e"/><ellipse cx="12.5" cy="9" rx="10.5" ry="2.6" fill="#3e9e3e"/><ellipse cx="12.5" cy="9.3" rx="9" ry="1.7" fill="#1b1c1f"/><path d="M10 10L22 2.5" stroke="#3e9e3e" stroke-width="1.4"/><path d="M7.5 13.5v4M16.5 13.5v4" stroke="#1b1c1f" stroke-width="1"/></svg><div class="t" style="left:673px;top:768px;font-size:13px;color:#e8e8e8">G</div><div class="t" style="left:690px;top:770px;font-size:10px;color:#e8e8e8">&#9660;</div><div class="abs" style="left:709px;top:762px;width:26px;height:26px;background:#474b50"></div><div class="abs" style="left:737px;top:762px;width:26px;height:26px;background:#474b50"></div><div class="abs" style="left:765px;top:762px;width:26px;height:26px;background:#474b50"></div><div class="abs" style="left:793px;top:762px;width:26px;height:26px;background:#474b50"></div><div class="abs" style="left:821px;top:762px;width:26px;height:26px;background:#393c40"></div><div class="abs" style="left:849px;top:762px;width:26px;height:26px;background:#393c40"></div><div class="abs" style="left:877px;top:762px;width:26px;height:26px;background:#393c40"></div><div class="abs" style="left:905px;top:762px;width:26px;height:26px;background:#393c40"></div><div class="abs" style="left:933px;top:762px;width:26px;height:26px;background:#474b50"></div><div class="abs" style="left:961px;top:762px;width:26px;height:26px;background:#474b50"></div><div class="abs" style="left:989px;top:762px;width:26px;height:26px;background:#474b50"></div><div class="abs" style="left:1017px;top:762px;width:26px;height:26px;background:#474b50"></div><div class="abs" style="left:1045px;top:762px;width:26px;height:26px;background:#393c40"></div><div class="abs" style="left:1073px;top:762px;width:26px;height:26px;background:#393c40"></div><div class="abs" style="left:1101px;top:762px;width:26px;height:26px;background:#393c40"></div><div class="abs" style="left:1129px;top:762px;width:26px;height:26px;background:#393c40"></div><div class="abs" style="left:627px;top:790px;width:80px;height:26px;border-radius:4px 0 0 4px;background:#1b1c1f"></div><svg class="abs" style="left:638px;top:793px" width="25" height="22" viewBox="0 0 25 22"><path d="M2 9h21v6.5c0 1.5-4.7 2.5-10.5 2.5S2 17 2 15.5z" fill="#5b2ca5"/><ellipse cx="12.5" cy="9" rx="10.5" ry="2.6" fill="#5b2ca5"/><ellipse cx="12.5" cy="9.3" rx="9" ry="1.7" fill="#1b1c1f"/><path d="M7.5 13v4M16.5 13v4" stroke="#1b1c1f" stroke-width="1"/></svg><div class="t" style="left:673px;top:796px;font-size:13px;color:#e8e8e8">F</div><div class="t" style="left:690px;top:798px;font-size:10px;color:#e8e8e8">&#9660;</div><div class="abs" style="left:709px;top:790px;width:26px;height:26px;background:#474b50"></div><div class="abs" style="left:737px;top:790px;width:26px;height:26px;background:#474b50"></div><div class="abs" style="left:765px;top:790px;width:26px;height:26px;background:#474b50"></div><div class="abs" style="left:793px;top:790px;width:26px;height:26px;background:#474b50"></div><div class="abs" style="left:821px;top:790px;width:26px;height:26px;background:#393c40"></div><div class="abs" style="left:849px;top:790px;width:26px;height:26px;background:#393c40"></div><div class="abs" style="left:877px;top:790px;width:26px;height:26px;background:#393c40"></div><div class="abs" style="left:905px;top:790px;width:26px;height:26px;background:#393c40"></div><div class="abs" style="left:933px;top:790px;width:26px;height:26px;background:#474b50"></div><div class="abs" style="left:961px;top:790px;width:26px;height:26px;background:#474b50"></div><div class="abs" style="left:989px;top:790px;width:26px;height:26px;background:#474b50"></div><div class="abs" style="left:1017px;top:790px;width:26px;height:26px;background:#474b50"></div><div class="abs" style="left:1045px;top:790px;width:26px;height:26px;background:#393c40"></div><div class="abs" style="left:1073px;top:790px;width:26px;height:26px;background:#393c40"></div><div class="abs" style="left:1101px;top:790px;width:26px;height:26px;background:#393c40"></div><div class="abs" style="left:1129px;top:790px;width:26px;height:26px;background:#393c40"></div><div class="abs" style="left:823px;top:792px;width:22px;height:22px;border-radius:50%;background:#5b2ca5"></div><div class="abs" style="left:1047px;top:792px;width:22px;height:22px;border-radius:50%;background:#5b2ca5"></div><div class="abs" style="left:627px;top:818px;width:80px;height:26px;border-radius:4px 0 0 4px;background:#1b1c1f"></div><svg class="abs" style="left:638px;top:821px" width="25" height="22" viewBox="0 0 25 22"><path d="M2 7v9c0 1.5 4.7 2.5 10.5 2.5S23 17.5 23 16V7" fill="none" stroke="#d81f55" stroke-width="1.1"/><ellipse cx="12.5" cy="7" rx="10.5" ry="3" fill="#d81f55"/></svg><div class="t" style="left:673px;top:824px;font-size:13px;color:#e8e8e8">U</div><div class="t" style="left:690px;top:826px;font-size:10px;color:#e8e8e8">&#9660;</div><div class="abs" style="left:709px;top:818px;width:26px;height:26px;background:#474b50"></div><div class="abs" style="left:737px;top:818px;width:26px;height:26px;background:#474b50"></div><div class="abs" style="left:765px;top:818px;width:26px;height:26px;background:#474b50"></div><div class="abs" style="left:793px;top:818px;width:26px;height:26px;background:#474b50"></div><div class="abs" style="left:821px;top:818px;width:26px;height:26px;background:#393c40"></div><div class="abs" style="left:849px;top:818px;width:26px;height:26px;background:#393c40"></div><div class="abs" style="left:877px;top:818px;width:26px;height:26px;background:#393c40"></div><div class="abs" style="left:905px;top:818px;width:26px;height:26px;background:#393c40"></div><div class="abs" style="left:933px;top:818px;width:26px;height:26px;background:#474b50"></div><div class="abs" style="left:961px;top:818px;width:26px;height:26px;background:#474b50"></div><div class="abs" style="left:989px;top:818px;width:26px;height:26px;background:#474b50"></div><div class="abs" style="left:1017px;top:818px;width:26px;height:26px;background:#474b50"></div><div class="abs" style="left:1045px;top:818px;width:26px;height:26px;background:#393c40"></div><div class="abs" style="left:1073px;top:818px;width:26px;height:26px;background:#393c40"></div><div class="abs" style="left:1101px;top:818px;width:26px;height:26px;background:#393c40"></div><div class="abs" style="left:1129px;top:818px;width:26px;height:26px;background:#393c40"></div><div class="abs" style="left:627px;top:846px;width:80px;height:26px;border-radius:4px 0 0 4px;background:#1b1c1f"></div><svg class="abs" style="left:638px;top:849px" width="25" height="22" viewBox="0 0 25 22"><circle cx="12.5" cy="10" r="10" fill="none" stroke="#e65f1c" stroke-width="1.1"/><circle cx="12.5" cy="10.5" r="2.6" fill="#e65f1c"/><rect x="11.5" y="11" width="2" height="8" fill="#e65f1c"/><rect x="10" y="18.5" width="5" height="3" fill="#e65f1c"/></svg><div class="t" style="left:673px;top:852px;font-size:13px;color:#e8e8e8">S</div><div class="t" style="left:690px;top:854px;font-size:10px;color:#e8e8e8">&#9660;</div><div class="abs" style="left:709px;top:846px;width:26px;height:26px;background:#474b50"></div><div class="abs" style="left:737px;top:846px;width:26px;height:26px;background:#474b50"></div><div class="abs" style="left:765px;top:846px;width:26px;height:26px;background:#474b50"></div><div class="abs" style="left:793px;top:846px;width:26px;height:26px;background:#474b50"></div><div class="abs" style="left:821px;top:846px;width:26px;height:26px;background:#393c40"></div><div class="abs" style="left:849px;top:846px;width:26px;height:26px;background:#393c40"></div><div class="abs" style="left:877px;top:846px;width:26px;height:26px;background:#393c40"></div><div class="abs" style="left:905px;top:846px;width:26px;height:26px;background:#393c40"></div><div class="abs" style="left:933px;top:846px;width:26px;height:26px;background:#474b50"></div><div class="abs" style="left:961px;top:846px;width:26px;height:26px;background:#474b50"></div><div class="abs" style="left:989px;top:846px;width:26px;height:26px;background:#474b50"></div><div class="abs" style="left:1017px;top:846px;width:26px;height:26px;background:#474b50"></div><div class="abs" style="left:1045px;top:846px;width:26px;height:26px;background:#393c40"></div><div class="abs" style="left:1073px;top:846px;width:26px;height:26px;background:#393c40"></div><div class="abs" style="left:1101px;top:846px;width:26px;height:26px;background:#393c40"></div><div class="abs" style="left:1129px;top:846px;width:26px;height:26px;background:#393c40"></div><div class="abs" style="left:711px;top:848px;width:22px;height:22px;border-radius:50%;background:#e65f1c"></div><div class="abs" style="left:907px;top:848px;width:22px;height:22px;border-radius:50%;background:#e65f1c"></div><div class="abs" style="left:935px;top:848px;width:22px;height:22px;border-radius:50%;background:#e65f1c"></div><div class="abs" style="left:991px;top:848px;width:22px;height:22px;border-radius:50%;background:#e65f1c"></div><div class="abs" style="left:1103px;top:848px;width:22px;height:22px;border-radius:50%;background:#e65f1c"></div><div class="abs" style="left:1164px;top:650px;width:82px;height:32px;border-radius:4px;background:#e8e9e8"></div><svg class="abs" style="left:1199px;top:658px" width="12" height="14" viewBox="0 0 12 14"><path d="M1 0.5v13L11.5 7z" fill="#1b1c1f"/></svg><div class="t" style="left:1164px;top:698px;width:82px;text-align:center;font-size:13px;color:#dcdcdc"><span style="display:inline-block;transform:scaleX(0.9)">PATTERNS</span></div><div class="abs" style="left:1164px;top:719px;width:82px;height:107px;border-radius:4px;background:#1b1c1f;overflow:hidden"></div><div class="t" style="left:1164px;top:726px;width:40px;text-align:center;font-size:13px;color:#26b08b">A</div><div class="t" style="left:1205px;top:726px;width:40px;text-align:center;font-size:13px;color:#e8e8e8">B</div><div class="abs" style="left:1164px;top:745px;width:82px;height:1px;background:#35383d"></div><div class="t" style="left:1164px;top:753px;width:40px;text-align:center;font-size:13px;color:#e8e8e8">C</div><div class="t" style="left:1205px;top:753px;width:40px;text-align:center;font-size:13px;color:#e8e8e8">D</div><div class="abs" style="left:1164px;top:772px;width:82px;height:1px;background:#35383d"></div><div class="t" style="left:1164px;top:780px;width:40px;text-align:center;font-size:13px;color:#e8e8e8">E</div><div class="t" style="left:1205px;top:780px;width:40px;text-align:center;font-size:13px;color:#e8e8e8">F</div><div class="abs" style="left:1164px;top:799px;width:82px;height:1px;background:#35383d"></div><div class="t" style="left:1164px;top:807px;width:40px;text-align:center;font-size:13px;color:#e8e8e8">G</div><div class="t" style="left:1205px;top:807px;width:40px;text-align:center;font-size:13px;color:#e8e8e8">H</div><div class="abs" style="left:1204px;top:719px;width:1px;height:107px;background:#35383d"></div><div class="abs" style="left:1164px;top:840px;width:82px;height:32px;border-radius:4px;background:#24a384"></div><div class="t" style="left:1164px;top:849px;width:82px;text-align:center;font-size:13.5px;color:#eef">Add A</div></body></html>
